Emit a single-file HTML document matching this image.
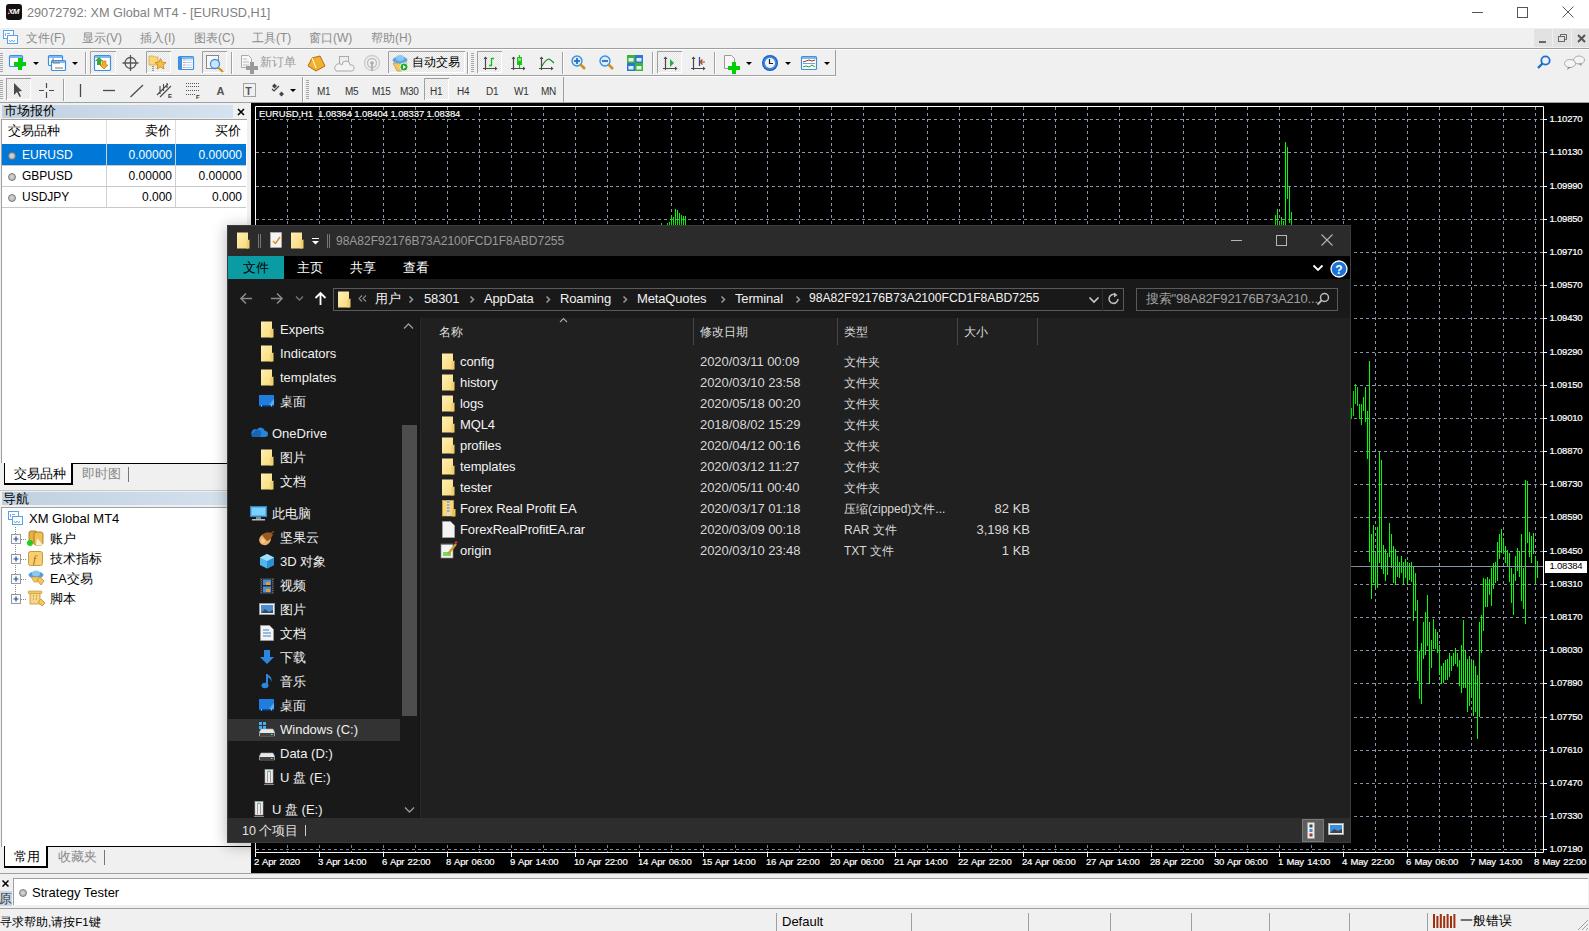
<!DOCTYPE html>
<html><head><meta charset="utf-8"><style>
html,body{margin:0;padding:0;width:1589px;height:931px;overflow:hidden;background:#f0f0f0;font-family:"Liberation Sans", sans-serif;}
div,svg{box-sizing:border-box;}
</style></head><body>
<div style="position:relative;width:1589px;height:931px;overflow:hidden;">
<div style="position:absolute;left:0px;top:0px;width:1589px;height:28px;background:#fff;"></div><div style="position:absolute;left:6px;top:4px;width:16px;height:16px;background:#111;border-radius:3px;"></div><div style="position:absolute;left:8px;top:8px;font-size:8px;line-height:8px;color:#fff;white-space:nowrap;font-weight:bold;font-style:italic;letter-spacing:-0.5px;">XM</div><div style="position:absolute;left:8px;top:11px;width:2px;height:2px;background:#c00;"></div><div style="position:absolute;left:27px;top:6px;font-size:12.7px;line-height:14px;color:#808080;white-space:nowrap;">29072792: XM Global MT4 - [EURUSD,H1]</div><div style="position:absolute;left:1472px;top:12px;width:11px;height:1px;background:#555;"></div><div style="position:absolute;left:1517px;top:7px;width:11px;height:11px;border:1px solid #555;"></div><svg style="position:absolute;left:1562px;top:6px;" width="12" height="12" viewBox="0 0 12 12"><path d="M0.5 0.5 L11.5 11.5 M11.5 0.5 L0.5 11.5" stroke="#555" stroke-width="1"/></svg><div style="position:absolute;left:0px;top:28px;width:1589px;height:20px;background:#f0f0f0;"></div><div style="position:absolute;left:0px;top:48px;width:1589px;height:1px;background:#a0a0a0;"></div><div style="position:absolute;left:0px;top:49px;width:1589px;height:1px;background:#fff;"></div><div style="position:absolute;left:26px;top:31px;font-size:12px;line-height:15px;color:#8c8c8c;white-space:nowrap;">文件(F)</div><div style="position:absolute;left:82px;top:31px;font-size:12px;line-height:15px;color:#8c8c8c;white-space:nowrap;">显示(V)</div><div style="position:absolute;left:140px;top:31px;font-size:12px;line-height:15px;color:#8c8c8c;white-space:nowrap;">插入(I)</div><div style="position:absolute;left:194px;top:31px;font-size:12px;line-height:15px;color:#8c8c8c;white-space:nowrap;">图表(C)</div><div style="position:absolute;left:252px;top:31px;font-size:12px;line-height:15px;color:#8c8c8c;white-space:nowrap;">工具(T)</div><div style="position:absolute;left:309px;top:31px;font-size:12px;line-height:15px;color:#8c8c8c;white-space:nowrap;">窗口(W)</div><div style="position:absolute;left:371px;top:31px;font-size:12px;line-height:15px;color:#8c8c8c;white-space:nowrap;">帮助(H)</div><div style="position:absolute;left:1534px;top:29px;width:18px;height:18px;background:#e2e2e2;"></div><div style="position:absolute;left:1553px;top:29px;width:18px;height:18px;background:#e2e2e2;"></div><div style="position:absolute;left:1572px;top:29px;width:18px;height:18px;background:#e2e2e2;"></div><div style="position:absolute;left:1539px;top:41px;width:7px;height:2px;background:#666;"></div><svg style="position:absolute;left:1557px;top:33px;" width="10" height="10" viewBox="0 0 10 10"><rect x="1.5" y="3.5" width="6" height="5" fill="none" stroke="#666"/><path d="M3.5 3.5 V1.5 H9.5 V6.5 H7.5" fill="none" stroke="#666"/></svg><svg style="position:absolute;left:1577px;top:34px;" width="9" height="9" viewBox="0 0 9 9"><path d="M1 1 L8 8 M8 1 L1 8" stroke="#555" stroke-width="2"/></svg><svg style="position:absolute;left:0px;top:0px;" width="1589" height="104" viewBox="0 0 1589 104"><rect x="0" y="75" width="836" height="1" fill="#a0a0a0"/><rect x="0" y="76" width="836" height="1" fill="#fff"/><rect x="835" y="50" width="1" height="26" fill="#a0a0a0"/><rect x="563" y="77" width="1" height="25" fill="#a0a0a0"/><rect x="0" y="102" width="1589" height="1" fill="#a0a0a0"/><defs><pattern id="chk" width="2" height="2" patternUnits="userSpaceOnUse"><rect width="2" height="2" fill="#f7f7f7"/><rect width="1" height="1" fill="#e4e4e4"/><rect x="1" y="1" width="1" height="1" fill="#e4e4e4"/></pattern></defs><rect x="0" y="53" width="3" height="1" fill="#a8a8a8"/><rect x="0" y="55" width="3" height="1" fill="#a8a8a8"/><rect x="0" y="57" width="3" height="1" fill="#a8a8a8"/><rect x="0" y="59" width="3" height="1" fill="#a8a8a8"/><rect x="0" y="61" width="3" height="1" fill="#a8a8a8"/><rect x="0" y="63" width="3" height="1" fill="#a8a8a8"/><rect x="0" y="65" width="3" height="1" fill="#a8a8a8"/><rect x="0" y="67" width="3" height="1" fill="#a8a8a8"/><rect x="0" y="69" width="3" height="1" fill="#a8a8a8"/><rect x="0" y="71" width="3" height="1" fill="#a8a8a8"/><rect x="9.5" y="55.5" width="13" height="11" rx="1" fill="#fff" stroke="#3d8fe0" stroke-width="1.2"/><rect x="10" y="56" width="12" height="2" fill="#7db8f0"/><path d="M18 58 H22 V62 H26 V66 H22 V70 H18 V66 H14 V62 H18Z" fill="#00d000"/><path d="M33 62 H39 L36 65Z" fill="#000"/><rect x="48.5" y="55.5" width="14" height="10" rx="1" fill="#fff" stroke="#3d8fe0" stroke-width="1.2"/><rect x="49" y="56" width="13" height="2" fill="#7db8f0"/><rect x="51.5" y="60.5" width="14" height="10" rx="1" fill="#fff" stroke="#3d8fe0" stroke-width="1.2"/><rect x="52" y="61" width="13" height="2" fill="#7db8f0"/><path d="M53 58 V63 M53 63 H60 M55 68 H63" stroke="#777" stroke-width="1"/><path d="M72 62 H78 L75 65Z" fill="#000"/><rect x="85" y="52" width="1" height="22" fill="#a0a0a0"/><rect x="86" y="52" width="1" height="22" fill="#fff"/><rect x="90" y="51" width="26" height="23" fill="url(#chk)"/><path d="M90.5 74 V51.5 H116" stroke="#a0a0a0" fill="none"/><path d="M91 73.5 H115.5 V52" stroke="#fff" fill="none"/><rect x="94.5" y="55.5" width="16" height="15" rx="1" fill="#fff" stroke="#3d8fe0" stroke-width="1.2"/><rect x="95" y="56" width="15" height="2" fill="#7db8f0"/><path d="M99 57 L103 61 H101 V65 H97 V61 H95Z" fill="#3aa83a"/><path d="M104 69 L108 65 H106 V61 H102 V65 H100Z" fill="#f0b020" stroke="#c07010" stroke-width="0.6"/><circle cx="130.5" cy="63" r="5.5" fill="none" stroke="#555" stroke-width="1.3"/><path d="M130.5 55 V71 M122.5 63 H138.5" stroke="#555" stroke-width="1.3"/><rect x="146" y="51" width="25" height="22" fill="url(#chk)"/><path d="M146.5 73 V51.5 H171" stroke="#a0a0a0" fill="none"/><path d="M147 72.5 H170.5 V52" stroke="#fff" fill="none"/><path d="M149 56 H153 L154 57 H158 V65 H149Z" fill="#f8d878" stroke="#d8a030" stroke-width="0.7"/><path d="M160.5 58.5 L162.2 62.2 L166 62.6 L163.1 65.2 L164 69 L160.5 67 L157 69 L157.9 65.2 L155 62.6 L158.8 62.2Z" fill="#f4c040" stroke="#c88010" stroke-width="0.8"/><path d="M153 66 V71" stroke="#333" stroke-width="1" stroke-dasharray="1 1"/><rect x="178.5" y="56.5" width="15" height="13" rx="1" fill="#fff" stroke="#3d8fe0" stroke-width="1.2"/><rect x="179" y="57" width="14" height="2" fill="#7db8f0"/><rect x="179" y="57" width="3" height="12" fill="#3d8fe0"/><path d="M185 60 H192 M185 62.5 H192 M185 65 H192 M185 67.5 H192" stroke="#9cc4ec" stroke-width="0.8"/><path d="M183.5 60 h1 M183.5 62.5 h1 M183.5 65 h1 M183.5 67.5 h1" stroke="#a02020"/><rect x="202" y="51" width="25" height="22" fill="url(#chk)"/><path d="M202.5 73 V51.5 H227" stroke="#a0a0a0" fill="none"/><path d="M203 72.5 H226.5 V52" stroke="#fff" fill="none"/><rect x="206.5" y="55.5" width="12" height="13" fill="#f8f8f8" stroke="#888"/><circle cx="215" cy="64" r="4.5" fill="#cfe6fa" stroke="#3d8fe0" stroke-width="1.3"/><path d="M218 67.5 L223 72" stroke="#d09020" stroke-width="2.2"/><rect x="231" y="52" width="1" height="22" fill="#a0a0a0"/><rect x="232" y="52" width="1" height="22" fill="#fff"/><path d="M241.5 55.5 H248.5 L251.5 58.5 V67.5 H241.5Z" fill="#f8f8f8" stroke="#aaa"/><path d="M243 59 H247 M243 62 H249 M243 65 H249" stroke="#bbb"/><path d="M250 62 H254 V66 H258 V70 H254 V74 H250 V70 H246 V66 H250Z" fill="#9a9a9a"/><path d="M312 58 L320 56 L325 66 L316 71 L308 66Z" fill="#f0b030" stroke="#b86a10" stroke-width="1"/><path d="M312 58 L316 68" stroke="#fff3c0" stroke-width="1.2"/><rect x="339.5" y="56.5" width="9" height="8" fill="#eee" stroke="#aaa"/><path d="M336 71 H352 A3 3 0 0 0 350 65 A4 4 0 0 0 342 65 A3 3 0 0 0 336 71Z" fill="#f4f4f4" stroke="#aaa"/><circle cx="372" cy="63" r="7.5" fill="none" stroke="#cfcfcf" stroke-width="1.5"/><circle cx="372" cy="63" r="4.5" fill="none" stroke="#bdbdbd" stroke-width="1.3"/><circle cx="372" cy="63" r="1.8" fill="#aaa"/><path d="M372 64 V71" stroke="#aaa" stroke-width="1.5"/><rect x="388" y="51" width="77" height="22" fill="url(#chk)"/><path d="M388.5 73 V51.5 H465" stroke="#a0a0a0" fill="none"/><path d="M389 72.5 H464.5 V52" stroke="#fff" fill="none"/><path d="M393 63 L407 63 L402 71 L397 71Z" fill="#f0c860" stroke="#c89030" stroke-width="0.7"/><ellipse cx="400" cy="60" rx="7.5" ry="3.5" fill="#5aa8e8"/><ellipse cx="400" cy="58" rx="4" ry="3" fill="#8cc8f4"/><circle cx="404" cy="67" r="4" fill="#22aa22" stroke="#fff" stroke-width="0.8"/><path d="M403 65 L406 67 L403 69Z" fill="#fff"/><rect x="467" y="52" width="1" height="22" fill="#a0a0a0"/><rect x="468" y="52" width="1" height="22" fill="#fff"/><rect x="471" y="53" width="3" height="1" fill="#a8a8a8"/><rect x="471" y="55" width="3" height="1" fill="#a8a8a8"/><rect x="471" y="57" width="3" height="1" fill="#a8a8a8"/><rect x="471" y="59" width="3" height="1" fill="#a8a8a8"/><rect x="471" y="61" width="3" height="1" fill="#a8a8a8"/><rect x="471" y="63" width="3" height="1" fill="#a8a8a8"/><rect x="471" y="65" width="3" height="1" fill="#a8a8a8"/><rect x="471" y="67" width="3" height="1" fill="#a8a8a8"/><rect x="471" y="69" width="3" height="1" fill="#a8a8a8"/><rect x="471" y="71" width="3" height="1" fill="#a8a8a8"/><rect x="477" y="51" width="25" height="22" fill="url(#chk)"/><path d="M477.5 73 V51.5 H502" stroke="#a0a0a0" fill="none"/><path d="M478 72.5 H501.5 V52" stroke="#fff" fill="none"/><path d="M485.5 57 V70 M483 68.5 H497" stroke="#4a4a4a" stroke-width="1.2"/><path d="M483.5 59 L485.5 56.5 L487.5 59Z M495 66.5 L497.5 68.5 L495 70.5Z" fill="#4a4a4a"/><path d="M491.5 58 V66 M491.5 58.5 H494 M489 65.5 H491.5" stroke="#10c010" stroke-width="1.3"/><path d="M513.5 57 V70 M511 68.5 H525" stroke="#4a4a4a" stroke-width="1.2"/><path d="M511.5 59 L513.5 56.5 L515.5 59Z M523 66.5 L525.5 68.5 L523 70.5Z" fill="#4a4a4a"/><rect x="517" y="57" width="5" height="8" fill="#10d010"/><path d="M519.5 55 V68" stroke="#10c010" stroke-width="1.2"/><rect x="518" y="58" width="3" height="3" fill="#9c9"/><path d="M541.5 57 V70 M539 68.5 H553" stroke="#4a4a4a" stroke-width="1.2"/><path d="M539.5 59 L541.5 56.5 L543.5 59Z M551 66.5 L553.5 68.5 L551 70.5Z" fill="#4a4a4a"/><path d="M542 66 Q546 59 549 59 Q551 60 554 63" stroke="#109010" stroke-width="1.1" fill="none"/><rect x="562" y="52" width="1" height="22" fill="#a0a0a0"/><rect x="563" y="52" width="1" height="22" fill="#fff"/><circle cx="577" cy="61" r="5" fill="#d8eefc" stroke="#3d8fe0" stroke-width="1.4"/><path d="M580.5 64.5 L585 69" stroke="#d09020" stroke-width="2.5"/><path d="M574 61 H580" stroke="#2a6cc0" stroke-width="1.8"/><path d="M577 58 V64" stroke="#2a6cc0" stroke-width="1.8"/><circle cx="605" cy="61" r="5" fill="#d8eefc" stroke="#3d8fe0" stroke-width="1.4"/><path d="M608.5 64.5 L613 69" stroke="#d09020" stroke-width="2.5"/><path d="M602 61 H608" stroke="#2a6cc0" stroke-width="1.8"/><rect x="627" y="55" width="8" height="8" fill="#3cb43c"/><rect x="635" y="55" width="8" height="8" fill="#2a78d0"/><rect x="627" y="63" width="8" height="8" fill="#2a78d0"/><rect x="635" y="63" width="8" height="8" fill="#3cb43c"/><rect x="628.5" y="58" width="5" height="3.5" fill="#e8f4e8"/><rect x="636.5" y="58" width="5" height="3.5" fill="#e0ecf8"/><rect x="628.5" y="66" width="5" height="3.5" fill="#e0ecf8"/><rect x="636.5" y="66" width="5" height="3.5" fill="#e8f4e8"/><rect x="652" y="52" width="1" height="22" fill="#a0a0a0"/><rect x="653" y="52" width="1" height="22" fill="#fff"/><rect x="657" y="51" width="25" height="22" fill="url(#chk)"/><path d="M657.5 73 V51.5 H682" stroke="#a0a0a0" fill="none"/><path d="M658 72.5 H681.5 V52" stroke="#fff" fill="none"/><path d="M665.5 57 V70 M663 68.5 H677" stroke="#4a4a4a" stroke-width="1.2"/><path d="M663.5 59 L665.5 56.5 L667.5 59Z M675 66.5 L677.5 68.5 L675 70.5Z" fill="#4a4a4a"/><path d="M670 59 L674 63 L670 67Z" fill="#20b040"/><path d="M693.5 57 V70 M691 68.5 H705" stroke="#4a4a4a" stroke-width="1.2"/><path d="M691.5 59 L693.5 56.5 L695.5 59Z M703 66.5 L705.5 68.5 L703 70.5Z" fill="#4a4a4a"/><path d="M699.5 57 V66" stroke="#2050c0" stroke-width="1.3"/><path d="M705 62 H701 M702.5 59.5 L700 62 L702.5 64.5" stroke="#b04010" stroke-width="1.2" fill="none"/><rect x="714" y="52" width="1" height="22" fill="#a0a0a0"/><rect x="715" y="52" width="1" height="22" fill="#fff"/><path d="M724.5 55.5 H731.5 L734.5 58.5 V68.5 H724.5Z" fill="#f8f8f8" stroke="#999"/><path d="M732 62 H736 V66 H740 V70 H736 V74 H732 V70 H728 V66 H732Z" fill="#00d000"/><path d="M746 62 H752 L749 65Z" fill="#000"/><circle cx="770" cy="63" r="8" fill="#1a5cc0"/><circle cx="770" cy="63" r="6.8" fill="#3a8ae8"/><circle cx="770" cy="63" r="5" fill="#f4f4f4"/><path d="M769.5 59 V63.5 H773" stroke="#222" stroke-width="1.2" fill="none"/><path d="M785 62 H791 L788 65Z" fill="#000"/><rect x="801.5" y="56.5" width="15" height="13" rx="1" fill="#fff" stroke="#3d8fe0" stroke-width="1.2"/><rect x="802" y="57" width="14" height="2" fill="#7db8f0"/><path d="M803 63.5 H815" stroke="#3d8fe0" stroke-width="0.8"/><path d="M803 62 L806 61 L809 60 L812 61 L815 60" stroke="#b03010" stroke-width="1" fill="none"/><path d="M803 67 L806 66 L809 67 L812 65 L815 67" stroke="#20a040" stroke-width="1" fill="none"/><path d="M824 62 H830 L827 65Z" fill="#000"/><circle cx="1545.5" cy="60.5" r="4.2" fill="none" stroke="#1a6fd0" stroke-width="1.8"/><path d="M1542.5 63.5 L1538 68" stroke="#1a6fd0" stroke-width="2.4"/><ellipse cx="1579" cy="60" rx="5.5" ry="4" fill="#f4f4f4" stroke="#999" stroke-width="0.8"/><path d="M1581 63.5 L1582 66 L1578 63.5" fill="#888"/><ellipse cx="1570" cy="63.5" rx="5.5" ry="4" fill="#f4f4f4" stroke="#999" stroke-width="0.8"/><path d="M1568 67 L1567 70 L1571 67" fill="#888"/><rect x="0" y="80" width="3" height="1" fill="#a8a8a8"/><rect x="0" y="82" width="3" height="1" fill="#a8a8a8"/><rect x="0" y="84" width="3" height="1" fill="#a8a8a8"/><rect x="0" y="86" width="3" height="1" fill="#a8a8a8"/><rect x="0" y="88" width="3" height="1" fill="#a8a8a8"/><rect x="0" y="90" width="3" height="1" fill="#a8a8a8"/><rect x="0" y="92" width="3" height="1" fill="#a8a8a8"/><rect x="0" y="94" width="3" height="1" fill="#a8a8a8"/><rect x="0" y="96" width="3" height="1" fill="#a8a8a8"/><rect x="0" y="98" width="3" height="1" fill="#a8a8a8"/><rect x="6" y="78" width="25" height="22" fill="url(#chk)"/><path d="M6.5 100 V78.5 H31" stroke="#a0a0a0" fill="none"/><path d="M7 99.5 H30.5 V79" stroke="#fff" fill="none"/><path d="M14 83 L14 95 L17 92 L19.5 97 L21 96.3 L18.6 91.4 L22 91Z" fill="#4a4a4a"/><path d="M46.5 83 V88 M46.5 92 V98 M39 90.5 H44 M49 90.5 H54" stroke="#4a4a4a" stroke-width="1.2"/><rect x="63" y="79" width="1" height="22" fill="#a0a0a0"/><rect x="64" y="79" width="1" height="22" fill="#fff"/><path d="M80.5 84 V97" stroke="#4a4a4a" stroke-width="1.3"/><path d="M103 90.5 H115" stroke="#4a4a4a" stroke-width="1.3"/><path d="M130.5 97 L143 85" stroke="#4a4a4a" stroke-width="1.2"/><path d="M157 95 L168 84 M160 97 L171 86 M160 86 V94 M163.5 84 V91 M167 83 V88" stroke="#4a4a4a" stroke-width="1.1"/><text x="168" y="98" font-size="6" font-weight="bold" fill="#333" font-family="Liberation Sans">E</text><path d="M186 83.5 H199 M186 86.5 H199 M186 90.5 H199 M186 94.5 H195" stroke="#555" stroke-width="1" stroke-dasharray="1 1"/><text x="196" y="98.5" font-size="6" font-weight="bold" fill="#333" font-family="Liberation Sans">F</text><text x="216.5" y="95" font-size="11" font-weight="bold" fill="#555" font-family="Liberation Sans">A</text><rect x="243.5" y="83.5" width="12" height="13" fill="none" stroke="#555" stroke-width="1" stroke-dasharray="1 1"/><text x="245.2" y="94.5" font-size="10.5" font-weight="bold" fill="#555" font-family="Liberation Sans">T</text><path d="M272 86 L274.5 83.5 L277 86 L274.5 88.5Z M279 94 L281.5 91.5 L284 94 L281.5 96.5Z" fill="#444"/><path d="M272 89 L274 91 L279 86" stroke="#444" stroke-width="1.2" fill="none"/><path d="M290 89 H296 L293 92Z" fill="#000"/><rect x="302" y="77" width="1" height="25" fill="#a0a0a0"/><rect x="303" y="77" width="1" height="25" fill="#fff"/><rect x="306" y="80" width="3" height="1" fill="#a8a8a8"/><rect x="306" y="82" width="3" height="1" fill="#a8a8a8"/><rect x="306" y="84" width="3" height="1" fill="#a8a8a8"/><rect x="306" y="86" width="3" height="1" fill="#a8a8a8"/><rect x="306" y="88" width="3" height="1" fill="#a8a8a8"/><rect x="306" y="90" width="3" height="1" fill="#a8a8a8"/><rect x="306" y="92" width="3" height="1" fill="#a8a8a8"/><rect x="306" y="94" width="3" height="1" fill="#a8a8a8"/><rect x="306" y="96" width="3" height="1" fill="#a8a8a8"/><rect x="306" y="98" width="3" height="1" fill="#a8a8a8"/><rect x="424" y="78" width="25" height="22" fill="url(#chk)"/><path d="M424.5 100 V78.5 H449" stroke="#a0a0a0" fill="none"/><path d="M425 99.5 H448.5 V79" stroke="#fff" fill="none"/></svg><div style="position:absolute;left:260px;top:55px;font-size:12px;line-height:14px;color:#9a9a9a;white-space:nowrap;">新订单</div><div style="position:absolute;left:412px;top:55px;font-size:11.6px;line-height:14px;color:#000;white-space:nowrap;">自动交易</div><div style="position:absolute;left:317px;top:85.5px;font-size:10px;line-height:12px;color:#333;white-space:nowrap;letter-spacing:-0.3px;">M1</div><div style="position:absolute;left:345px;top:85.5px;font-size:10px;line-height:12px;color:#333;white-space:nowrap;letter-spacing:-0.3px;">M5</div><div style="position:absolute;left:372px;top:85.5px;font-size:10px;line-height:12px;color:#333;white-space:nowrap;letter-spacing:-0.3px;">M15</div><div style="position:absolute;left:400px;top:85.5px;font-size:10px;line-height:12px;color:#333;white-space:nowrap;letter-spacing:-0.3px;">M30</div><div style="position:absolute;left:430px;top:85.5px;font-size:10px;line-height:12px;color:#333;white-space:nowrap;letter-spacing:-0.3px;">H1</div><div style="position:absolute;left:457px;top:85.5px;font-size:10px;line-height:12px;color:#333;white-space:nowrap;letter-spacing:-0.3px;">H4</div><div style="position:absolute;left:486px;top:85.5px;font-size:10px;line-height:12px;color:#333;white-space:nowrap;letter-spacing:-0.3px;">D1</div><div style="position:absolute;left:514px;top:85.5px;font-size:10px;line-height:12px;color:#333;white-space:nowrap;letter-spacing:-0.3px;">W1</div><div style="position:absolute;left:541px;top:85.5px;font-size:10px;line-height:12px;color:#333;white-space:nowrap;letter-spacing:-0.3px;">MN</div><div style="position:absolute;left:0px;top:103px;width:251px;height:770px;background:#f0f0f0;"></div><div style="position:absolute;left:2px;top:105px;width:231px;height:13px;background:linear-gradient(90deg,#c0d0df,#d5e3f0);"></div><div style="position:absolute;left:4px;top:104px;font-size:12.5px;line-height:15px;color:#000;white-space:nowrap;">市场报价</div><svg style="position:absolute;left:237px;top:108px;" width="8" height="8" viewBox="0 0 8 8"><path d="M1 1 L7 7 M7 1 L1 7" stroke="#000" stroke-width="1.6"/></svg><div style="position:absolute;left:1px;top:119px;width:246px;height:345px;background:#fff;border-left:1px solid #a0a0a0;border-top:1px solid #a0a0a0;"></div><div style="position:absolute;left:8px;top:124px;font-size:12.5px;line-height:15px;color:#000;white-space:nowrap;">交易品种</div><div style="position:absolute;right:1418px;top:124px;font-size:12.5px;line-height:15px;color:#000;white-space:nowrap;text-align:right;">卖价</div><div style="position:absolute;right:1348px;top:124px;font-size:12.5px;line-height:15px;color:#000;white-space:nowrap;text-align:right;">买价</div><div style="position:absolute;left:106px;top:120px;width:1px;height:24px;background:#dcdcdc;"></div><div style="position:absolute;left:175px;top:120px;width:1px;height:24px;background:#dcdcdc;"></div><div style="position:absolute;left:2px;top:144px;width:244px;height:21px;background:#0078d7;"></div><div style="position:absolute;left:106px;top:144px;width:1px;height:21px;background:#d0d0d0;"></div><div style="position:absolute;left:175px;top:144px;width:1px;height:21px;background:#d0d0d0;"></div><div style="position:absolute;left:2px;top:165px;width:244px;height:1px;background:#c8c8c8;"></div><div style="position:absolute;left:8px;top:152px;width:8px;height:8px;border-radius:50%;background:radial-gradient(circle at 45% 45%,#d8d8d8,#a8a8a8);border:1px solid #7a7a7a;"></div><div style="position:absolute;left:22px;top:148px;font-size:12px;line-height:14px;color:#fff;white-space:nowrap;">EURUSD</div><div style="position:absolute;right:1417px;top:148px;font-size:12px;line-height:14px;color:#fff;white-space:nowrap;text-align:right;">0.00000</div><div style="position:absolute;right:1347px;top:148px;font-size:12px;line-height:14px;color:#fff;white-space:nowrap;text-align:right;">0.00000</div><div style="position:absolute;left:106px;top:165px;width:1px;height:21px;background:#d0d0d0;"></div><div style="position:absolute;left:175px;top:165px;width:1px;height:21px;background:#d0d0d0;"></div><div style="position:absolute;left:2px;top:186px;width:244px;height:1px;background:#c8c8c8;"></div><div style="position:absolute;left:8px;top:173px;width:8px;height:8px;border-radius:50%;background:radial-gradient(circle at 45% 45%,#d8d8d8,#a8a8a8);border:1px solid #7a7a7a;"></div><div style="position:absolute;left:22px;top:169px;font-size:12px;line-height:14px;color:#000;white-space:nowrap;">GBPUSD</div><div style="position:absolute;right:1417px;top:169px;font-size:12px;line-height:14px;color:#000;white-space:nowrap;text-align:right;">0.00000</div><div style="position:absolute;right:1347px;top:169px;font-size:12px;line-height:14px;color:#000;white-space:nowrap;text-align:right;">0.00000</div><div style="position:absolute;left:106px;top:186px;width:1px;height:21px;background:#d0d0d0;"></div><div style="position:absolute;left:175px;top:186px;width:1px;height:21px;background:#d0d0d0;"></div><div style="position:absolute;left:2px;top:207px;width:244px;height:1px;background:#c8c8c8;"></div><div style="position:absolute;left:8px;top:194px;width:8px;height:8px;border-radius:50%;background:radial-gradient(circle at 45% 45%,#d8d8d8,#a8a8a8);border:1px solid #7a7a7a;"></div><div style="position:absolute;left:22px;top:190px;font-size:12px;line-height:14px;color:#000;white-space:nowrap;">USDJPY</div><div style="position:absolute;right:1417px;top:190px;font-size:12px;line-height:14px;color:#000;white-space:nowrap;text-align:right;">0.000</div><div style="position:absolute;right:1347px;top:190px;font-size:12px;line-height:14px;color:#000;white-space:nowrap;text-align:right;">0.000</div><div style="position:absolute;left:0px;top:463px;width:251px;height:22px;background:#f0f0f0;"></div><div style="position:absolute;left:72px;top:463px;width:179px;height:1px;background:#000;"></div><div style="position:absolute;left:4px;top:463px;width:69px;height:22px;background:#fff;border-left:1px solid #000;border-right:2px solid #000;border-bottom:2px solid #000;"></div><div style="position:absolute;left:14px;top:467px;font-size:12.5px;line-height:15px;color:#000;white-space:nowrap;">交易品种</div><div style="position:absolute;left:82px;top:467px;font-size:12.5px;line-height:15px;color:#888;white-space:nowrap;">即时图</div><div style="position:absolute;left:128px;top:467px;width:1px;height:15px;background:#777;"></div><div style="position:absolute;left:0px;top:490px;width:251px;height:1px;background:#c8c8c8;"></div><div style="position:absolute;left:2px;top:492px;width:249px;height:13px;background:linear-gradient(90deg,#c0d0df,#d5e3f0);"></div><div style="position:absolute;left:3px;top:492px;font-size:12.5px;line-height:15px;color:#000;white-space:nowrap;">导航</div><div style="position:absolute;left:1px;top:507px;width:250px;height:340px;background:#fff;border-left:1px solid #a0a0a0;border-top:1px solid #a0a0a0;"></div><div style="position:absolute;left:29px;top:511px;font-size:13px;line-height:15px;color:#000;white-space:nowrap;">XM Global MT4</div><div style="position:absolute;left:50px;top:532px;font-size:12.5px;line-height:15px;color:#000;white-space:nowrap;">账户</div><div style="position:absolute;left:50px;top:552px;font-size:12.5px;line-height:15px;color:#000;white-space:nowrap;">技术指标</div><div style="position:absolute;left:50px;top:572px;font-size:12.5px;line-height:15px;color:#000;white-space:nowrap;">EA交易</div><div style="position:absolute;left:50px;top:592px;font-size:12.5px;line-height:15px;color:#000;white-space:nowrap;">脚本</div><svg style="position:absolute;left:0px;top:0px;" width="251" height="620" viewBox="0 0 251 620"><rect x="8.5" y="511.5" width="10" height="8" fill="#fff" stroke="#5aa2e8"/><rect x="12.5" y="516.5" width="10" height="8" fill="#fff" stroke="#5aa2e8"/><path d="M14 521 l1.5 2 l1.5 -2 l1.5 2 l1.5 -2" stroke="#4a9ae8" fill="none" stroke-width="0.8"/><path d="M10.5 514 v3 M12 514.5 h3" stroke="#4a9ae8" stroke-width="0.8"/><path d="M15.5 527 V599" stroke="#888" stroke-dasharray="1 1"/><rect x="11.5" y="534.5" width="9" height="9" fill="#fafafa" stroke="#999"/><path d="M13.5 539 H18.5 M16 536.5 V541.5" stroke="#2050a0" stroke-width="1.2"/><path d="M21 539.5 H27" stroke="#888" stroke-dasharray="1 1"/><rect x="11.5" y="554.5" width="9" height="9" fill="#fafafa" stroke="#999"/><path d="M13.5 559 H18.5 M16 556.5 V561.5" stroke="#2050a0" stroke-width="1.2"/><path d="M21 559.5 H27" stroke="#888" stroke-dasharray="1 1"/><rect x="11.5" y="574.5" width="9" height="9" fill="#fafafa" stroke="#999"/><path d="M13.5 579 H18.5 M16 576.5 V581.5" stroke="#2050a0" stroke-width="1.2"/><path d="M21 579.5 H27" stroke="#888" stroke-dasharray="1 1"/><rect x="11.5" y="594.5" width="9" height="9" fill="#fafafa" stroke="#999"/><path d="M13.5 599 H18.5 M16 596.5 V601.5" stroke="#2050a0" stroke-width="1.2"/><path d="M21 599.5 H27" stroke="#888" stroke-dasharray="1 1"/><rect x="29" y="531" width="8" height="12" rx="2" fill="#e8b040" stroke="#a07020" stroke-width="0.8"/><rect x="34" y="532" width="9" height="13" rx="2" fill="#f0c050" stroke="#a07020" stroke-width="0.8"/><path d="M37 538 L43 545 H36Z" fill="#f8f0d0"/><circle cx="30" cy="543" r="3" fill="#20d020"/><rect x="28.5" y="551.5" width="14" height="14" rx="2" fill="#f6d070" stroke="#c89030" stroke-width="0.9"/><text x="33" y="563" font-size="11" font-style="italic" fill="#b06010" font-family="Liberation Serif">f</text><ellipse cx="36" cy="575" rx="7.5" ry="3.5" fill="#4aa0e0"/><ellipse cx="36" cy="573.5" rx="4" ry="3" fill="#8cc8f4"/><path d="M31 577 L41 577 L38 582 L34 582Z" fill="#f0c860" stroke="#c89030" stroke-width="0.6"/><path d="M37 580 L40 577 L44 581 L41 585Z" fill="#f0c860" stroke="#c89030" stroke-width="0.8"/><rect x="30" y="592" width="10" height="12" fill="#f4d888" stroke="#c89030" stroke-width="0.8"/><rect x="28" y="591" width="14" height="2.5" rx="1" fill="#f0c860" stroke="#c89030" stroke-width="0.6"/><path d="M38 602 L41 599 L45 603 L42 606Z" fill="#f0c860" stroke="#c89030" stroke-width="0.8"/><path d="M33 596 h1 M36 596 h1 M33 599 h1 M36 599 h1" stroke="#a08040"/><rect x="3.5" y="30.5" width="10" height="8" fill="#fff" stroke="#5aa2e8"/><rect x="7.5" y="35.5" width="10" height="8" fill="#fff" stroke="#5aa2e8"/><path d="M9 40 l1.5 2 l1.5 -2 l1.5 2 l1.5 -2" stroke="#4a9ae8" fill="none" stroke-width="0.8"/><path d="M5.5 33 v3 M7 33.5 h3" stroke="#4a9ae8" stroke-width="0.8"/></svg><div style="position:absolute;left:47px;top:846px;width:204px;height:1px;background:#000;"></div><div style="position:absolute;left:4px;top:846px;width:44px;height:22px;background:#fff;border-left:1px solid #000;border-right:2px solid #000;border-bottom:2px solid #000;"></div><div style="position:absolute;left:14px;top:850px;font-size:12.5px;line-height:15px;color:#000;white-space:nowrap;">常用</div><div style="position:absolute;left:58px;top:850px;font-size:12.5px;line-height:15px;color:#888;white-space:nowrap;">收藏夹</div><div style="position:absolute;left:104px;top:850px;width:1px;height:15px;background:#777;"></div><div style="position:absolute;left:251px;top:103px;width:1338px;height:770px;background:#000;"></div><div style="position:absolute;left:0px;top:873px;width:1589px;height:1px;background:#a0a0a0;"></div><div style="position:absolute;left:0px;top:874px;width:1589px;height:35px;background:#f0f0f0;"></div><div style="position:absolute;left:13px;top:878px;width:1575px;height:27px;background:#fff;border-top:1px solid #a0a0a0;border-left:1px solid #a0a0a0;"></div><svg style="position:absolute;left:2px;top:880px;" width="7" height="7" viewBox="0 0 7 7"><path d="M0.5 0.5 L6.5 6.5 M6.5 0.5 L0.5 6.5" stroke="#000" stroke-width="1.5"/></svg><div style="position:absolute;left:0px;top:891px;width:12px;height:15px;background:#c8d8e8;overflow:hidden;"><div style="font-size:13px;line-height:15px;margin-left:-1px;color:#333;">原</div></div><div style="position:absolute;left:19px;top:886px;font-size:1px;line-height:1px;color:#000;white-space:nowrap;"></div><div style="position:absolute;left:19px;top:889px;width:8px;height:8px;border-radius:50%;background:radial-gradient(circle at 45% 45%,#d8d8d8,#a8a8a8);border:1px solid #7a7a7a;"></div><div style="position:absolute;left:32px;top:885px;font-size:13px;line-height:15px;color:#000;white-space:nowrap;">Strategy Tester</div><div style="position:absolute;left:0px;top:908px;width:1589px;height:1px;background:#a0a0a0;"></div><div style="position:absolute;left:0px;top:909px;width:1589px;height:22px;background:#f0f0f0;"></div><div style="position:absolute;left:0px;top:914px;font-size:11.6px;line-height:15px;color:#000;white-space:nowrap;">寻求帮助,请按F1键</div><div style="position:absolute;left:776px;top:913px;width:1px;height:18px;background:#a0a0a0;"></div><div style="position:absolute;left:911px;top:913px;width:1px;height:18px;background:#a0a0a0;"></div><div style="position:absolute;left:1028px;top:913px;width:1px;height:18px;background:#a0a0a0;"></div><div style="position:absolute;left:1110px;top:913px;width:1px;height:18px;background:#a0a0a0;"></div><div style="position:absolute;left:1191px;top:913px;width:1px;height:18px;background:#a0a0a0;"></div><div style="position:absolute;left:1269px;top:913px;width:1px;height:18px;background:#a0a0a0;"></div><div style="position:absolute;left:1349px;top:913px;width:1px;height:18px;background:#a0a0a0;"></div><div style="position:absolute;left:1427px;top:913px;width:1px;height:18px;background:#a0a0a0;"></div><div style="position:absolute;left:782px;top:914px;font-size:13px;line-height:15px;color:#000;white-space:nowrap;">Default</div><div style="position:absolute;left:1460px;top:914px;font-size:12.5px;line-height:15px;color:#000;white-space:nowrap;">一般错误</div><svg style="position:absolute;left:1576px;top:918px;" width="13" height="13" viewBox="0 0 13 13"><path d="M12 2 L2 12 M12 6 L6 12 M12 10 L10 12" stroke="#a0a0a0" stroke-width="1"/></svg><svg style="position:absolute;left:1433px;top:914px;" width="24" height="14" viewBox="0 0 24 14"><rect x="0.0" y="0" width="2" height="14" fill="#a03010"/><rect x="3.4" y="2" width="2" height="12" fill="#a03010"/><rect x="6.8" y="0" width="2" height="14" fill="#a03010"/><rect x="10.2" y="2" width="2" height="12" fill="#a03010"/><rect x="13.6" y="0" width="2" height="14" fill="#a03010"/><rect x="17.0" y="2" width="2" height="12" fill="#a03010"/><rect x="20.4" y="0" width="2" height="14" fill="#a03010"/></svg><svg style="position:absolute;left:251px;top:103px;" width="1338" height="770" viewBox="0 0 1338 770"><line x1="36.5" y1="4" x2="36.5" y2="749" stroke="#8796a8" stroke-width="1" stroke-dasharray="3 3"/><line x1="68.5" y1="4" x2="68.5" y2="749" stroke="#8796a8" stroke-width="1" stroke-dasharray="3 3"/><line x1="100.5" y1="4" x2="100.5" y2="749" stroke="#8796a8" stroke-width="1" stroke-dasharray="3 3"/><line x1="132.5" y1="4" x2="132.5" y2="749" stroke="#8796a8" stroke-width="1" stroke-dasharray="3 3"/><line x1="164.5" y1="4" x2="164.5" y2="749" stroke="#8796a8" stroke-width="1" stroke-dasharray="3 3"/><line x1="196.5" y1="4" x2="196.5" y2="749" stroke="#8796a8" stroke-width="1" stroke-dasharray="3 3"/><line x1="228.5" y1="4" x2="228.5" y2="749" stroke="#8796a8" stroke-width="1" stroke-dasharray="3 3"/><line x1="260.5" y1="4" x2="260.5" y2="749" stroke="#8796a8" stroke-width="1" stroke-dasharray="3 3"/><line x1="292.5" y1="4" x2="292.5" y2="749" stroke="#8796a8" stroke-width="1" stroke-dasharray="3 3"/><line x1="324.5" y1="4" x2="324.5" y2="749" stroke="#8796a8" stroke-width="1" stroke-dasharray="3 3"/><line x1="356.5" y1="4" x2="356.5" y2="749" stroke="#8796a8" stroke-width="1" stroke-dasharray="3 3"/><line x1="388.5" y1="4" x2="388.5" y2="749" stroke="#8796a8" stroke-width="1" stroke-dasharray="3 3"/><line x1="420.5" y1="4" x2="420.5" y2="749" stroke="#8796a8" stroke-width="1" stroke-dasharray="3 3"/><line x1="452.5" y1="4" x2="452.5" y2="749" stroke="#8796a8" stroke-width="1" stroke-dasharray="3 3"/><line x1="484.5" y1="4" x2="484.5" y2="749" stroke="#8796a8" stroke-width="1" stroke-dasharray="3 3"/><line x1="516.5" y1="4" x2="516.5" y2="749" stroke="#8796a8" stroke-width="1" stroke-dasharray="3 3"/><line x1="548.5" y1="4" x2="548.5" y2="749" stroke="#8796a8" stroke-width="1" stroke-dasharray="3 3"/><line x1="580.5" y1="4" x2="580.5" y2="749" stroke="#8796a8" stroke-width="1" stroke-dasharray="3 3"/><line x1="612.5" y1="4" x2="612.5" y2="749" stroke="#8796a8" stroke-width="1" stroke-dasharray="3 3"/><line x1="644.5" y1="4" x2="644.5" y2="749" stroke="#8796a8" stroke-width="1" stroke-dasharray="3 3"/><line x1="676.5" y1="4" x2="676.5" y2="749" stroke="#8796a8" stroke-width="1" stroke-dasharray="3 3"/><line x1="708.5" y1="4" x2="708.5" y2="749" stroke="#8796a8" stroke-width="1" stroke-dasharray="3 3"/><line x1="740.5" y1="4" x2="740.5" y2="749" stroke="#8796a8" stroke-width="1" stroke-dasharray="3 3"/><line x1="772.5" y1="4" x2="772.5" y2="749" stroke="#8796a8" stroke-width="1" stroke-dasharray="3 3"/><line x1="804.5" y1="4" x2="804.5" y2="749" stroke="#8796a8" stroke-width="1" stroke-dasharray="3 3"/><line x1="836.5" y1="4" x2="836.5" y2="749" stroke="#8796a8" stroke-width="1" stroke-dasharray="3 3"/><line x1="868.5" y1="4" x2="868.5" y2="749" stroke="#8796a8" stroke-width="1" stroke-dasharray="3 3"/><line x1="900.5" y1="4" x2="900.5" y2="749" stroke="#8796a8" stroke-width="1" stroke-dasharray="3 3"/><line x1="932.5" y1="4" x2="932.5" y2="749" stroke="#8796a8" stroke-width="1" stroke-dasharray="3 3"/><line x1="964.5" y1="4" x2="964.5" y2="749" stroke="#8796a8" stroke-width="1" stroke-dasharray="3 3"/><line x1="996.5" y1="4" x2="996.5" y2="749" stroke="#8796a8" stroke-width="1" stroke-dasharray="3 3"/><line x1="1028.5" y1="4" x2="1028.5" y2="749" stroke="#8796a8" stroke-width="1" stroke-dasharray="3 3"/><line x1="1060.5" y1="4" x2="1060.5" y2="749" stroke="#8796a8" stroke-width="1" stroke-dasharray="3 3"/><line x1="1092.5" y1="4" x2="1092.5" y2="749" stroke="#8796a8" stroke-width="1" stroke-dasharray="3 3"/><line x1="1124.5" y1="4" x2="1124.5" y2="749" stroke="#8796a8" stroke-width="1" stroke-dasharray="3 3"/><line x1="1156.5" y1="4" x2="1156.5" y2="749" stroke="#8796a8" stroke-width="1" stroke-dasharray="3 3"/><line x1="1188.5" y1="4" x2="1188.5" y2="749" stroke="#8796a8" stroke-width="1" stroke-dasharray="3 3"/><line x1="1220.5" y1="4" x2="1220.5" y2="749" stroke="#8796a8" stroke-width="1" stroke-dasharray="3 3"/><line x1="1252.5" y1="4" x2="1252.5" y2="749" stroke="#8796a8" stroke-width="1" stroke-dasharray="3 3"/><line x1="1284.5" y1="4" x2="1284.5" y2="749" stroke="#8796a8" stroke-width="1" stroke-dasharray="3 3"/><line x1="5" y1="16.5" x2="1292" y2="16.5" stroke="#8796a8" stroke-width="1" stroke-dasharray="3 3"/><line x1="5" y1="49.5" x2="1292" y2="49.5" stroke="#8796a8" stroke-width="1" stroke-dasharray="3 3"/><line x1="5" y1="83.5" x2="1292" y2="83.5" stroke="#8796a8" stroke-width="1" stroke-dasharray="3 3"/><line x1="5" y1="116.5" x2="1292" y2="116.5" stroke="#8796a8" stroke-width="1" stroke-dasharray="3 3"/><line x1="5" y1="149.5" x2="1292" y2="149.5" stroke="#8796a8" stroke-width="1" stroke-dasharray="3 3"/><line x1="5" y1="182.5" x2="1292" y2="182.5" stroke="#8796a8" stroke-width="1" stroke-dasharray="3 3"/><line x1="5" y1="215.5" x2="1292" y2="215.5" stroke="#8796a8" stroke-width="1" stroke-dasharray="3 3"/><line x1="5" y1="249.5" x2="1292" y2="249.5" stroke="#8796a8" stroke-width="1" stroke-dasharray="3 3"/><line x1="5" y1="282.5" x2="1292" y2="282.5" stroke="#8796a8" stroke-width="1" stroke-dasharray="3 3"/><line x1="5" y1="315.5" x2="1292" y2="315.5" stroke="#8796a8" stroke-width="1" stroke-dasharray="3 3"/><line x1="5" y1="348.5" x2="1292" y2="348.5" stroke="#8796a8" stroke-width="1" stroke-dasharray="3 3"/><line x1="5" y1="381.5" x2="1292" y2="381.5" stroke="#8796a8" stroke-width="1" stroke-dasharray="3 3"/><line x1="5" y1="414.5" x2="1292" y2="414.5" stroke="#8796a8" stroke-width="1" stroke-dasharray="3 3"/><line x1="5" y1="448.5" x2="1292" y2="448.5" stroke="#8796a8" stroke-width="1" stroke-dasharray="3 3"/><line x1="5" y1="481.5" x2="1292" y2="481.5" stroke="#8796a8" stroke-width="1" stroke-dasharray="3 3"/><line x1="5" y1="514.5" x2="1292" y2="514.5" stroke="#8796a8" stroke-width="1" stroke-dasharray="3 3"/><line x1="5" y1="547.5" x2="1292" y2="547.5" stroke="#8796a8" stroke-width="1" stroke-dasharray="3 3"/><line x1="5" y1="580.5" x2="1292" y2="580.5" stroke="#8796a8" stroke-width="1" stroke-dasharray="3 3"/><line x1="5" y1="614.5" x2="1292" y2="614.5" stroke="#8796a8" stroke-width="1" stroke-dasharray="3 3"/><line x1="5" y1="647.5" x2="1292" y2="647.5" stroke="#8796a8" stroke-width="1" stroke-dasharray="3 3"/><line x1="5" y1="680.5" x2="1292" y2="680.5" stroke="#8796a8" stroke-width="1" stroke-dasharray="3 3"/><line x1="5" y1="713.5" x2="1292" y2="713.5" stroke="#8796a8" stroke-width="1" stroke-dasharray="3 3"/><line x1="5" y1="746.5" x2="1292" y2="746.5" stroke="#8796a8" stroke-width="1" stroke-dasharray="3 3"/><path d="M4.5 3.5 H1292.5 V749.5 H4.5 Z" fill="none" stroke="#fff" stroke-width="1"/><line x1="1293" y1="16.5" x2="1296" y2="16.5" stroke="#fff"/><line x1="1293" y1="49.5" x2="1296" y2="49.5" stroke="#fff"/><line x1="1293" y1="83.5" x2="1296" y2="83.5" stroke="#fff"/><line x1="1293" y1="116.5" x2="1296" y2="116.5" stroke="#fff"/><line x1="1293" y1="149.5" x2="1296" y2="149.5" stroke="#fff"/><line x1="1293" y1="182.5" x2="1296" y2="182.5" stroke="#fff"/><line x1="1293" y1="215.5" x2="1296" y2="215.5" stroke="#fff"/><line x1="1293" y1="249.5" x2="1296" y2="249.5" stroke="#fff"/><line x1="1293" y1="282.5" x2="1296" y2="282.5" stroke="#fff"/><line x1="1293" y1="315.5" x2="1296" y2="315.5" stroke="#fff"/><line x1="1293" y1="348.5" x2="1296" y2="348.5" stroke="#fff"/><line x1="1293" y1="381.5" x2="1296" y2="381.5" stroke="#fff"/><line x1="1293" y1="414.5" x2="1296" y2="414.5" stroke="#fff"/><line x1="1293" y1="448.5" x2="1296" y2="448.5" stroke="#fff"/><line x1="1293" y1="481.5" x2="1296" y2="481.5" stroke="#fff"/><line x1="1293" y1="514.5" x2="1296" y2="514.5" stroke="#fff"/><line x1="1293" y1="547.5" x2="1296" y2="547.5" stroke="#fff"/><line x1="1293" y1="580.5" x2="1296" y2="580.5" stroke="#fff"/><line x1="1293" y1="614.5" x2="1296" y2="614.5" stroke="#fff"/><line x1="1293" y1="647.5" x2="1296" y2="647.5" stroke="#fff"/><line x1="1293" y1="680.5" x2="1296" y2="680.5" stroke="#fff"/><line x1="1293" y1="713.5" x2="1296" y2="713.5" stroke="#fff"/><line x1="1293" y1="746.5" x2="1296" y2="746.5" stroke="#fff"/><line x1="4.5" y1="750" x2="4.5" y2="754" stroke="#fff"/><line x1="68.5" y1="750" x2="68.5" y2="754" stroke="#fff"/><line x1="132.5" y1="750" x2="132.5" y2="754" stroke="#fff"/><line x1="196.5" y1="750" x2="196.5" y2="754" stroke="#fff"/><line x1="260.5" y1="750" x2="260.5" y2="754" stroke="#fff"/><line x1="324.5" y1="750" x2="324.5" y2="754" stroke="#fff"/><line x1="388.5" y1="750" x2="388.5" y2="754" stroke="#fff"/><line x1="452.5" y1="750" x2="452.5" y2="754" stroke="#fff"/><line x1="516.5" y1="750" x2="516.5" y2="754" stroke="#fff"/><line x1="580.5" y1="750" x2="580.5" y2="754" stroke="#fff"/><line x1="644.5" y1="750" x2="644.5" y2="754" stroke="#fff"/><line x1="708.5" y1="750" x2="708.5" y2="754" stroke="#fff"/><line x1="772.5" y1="750" x2="772.5" y2="754" stroke="#fff"/><line x1="836.5" y1="750" x2="836.5" y2="754" stroke="#fff"/><line x1="900.5" y1="750" x2="900.5" y2="754" stroke="#fff"/><line x1="964.5" y1="750" x2="964.5" y2="754" stroke="#fff"/><line x1="1028.5" y1="750" x2="1028.5" y2="754" stroke="#fff"/><line x1="1092.5" y1="750" x2="1092.5" y2="754" stroke="#fff"/><line x1="1156.5" y1="750" x2="1156.5" y2="754" stroke="#fff"/><line x1="1220.5" y1="750" x2="1220.5" y2="754" stroke="#fff"/><line x1="1284.5" y1="750" x2="1284.5" y2="754" stroke="#fff"/><path d="M410.5 120V128M416.5 120V128M418.5 119V128M420.5 113V128M422.5 114V128M424.5 106V128M426.5 107V128M428.5 110V128M430.5 112V128M432.5 113V128M434.5 113V128M1024.5 112V128M1026.5 106V128M1028.5 121V128M1030.5 114V128M1032.5 118V128M1034.5 39V128M1036.5 44V96M1038.5 84V120M1040.5 109V128M1100.5 305V316M1102.5 288V313M1104.5 281V301M1106.5 284V303M1108.5 301V316M1110.5 301V322M1112.5 294V308M1114.5 284V319M1116.5 308V356M1118.5 258V459M1120.5 431V496M1122.5 422V480M1124.5 451V485M1126.5 424V485M1128.5 349V460M1130.5 357V466M1132.5 442V471M1134.5 446V478M1136.5 450V472M1138.5 420V454M1140.5 431V465M1142.5 443V480M1144.5 446V482M1146.5 453V474M1148.5 459V475M1150.5 453V470M1152.5 459V481M1154.5 456V475M1156.5 459V482M1158.5 460V477M1160.5 459V479M1162.5 463V518M1164.5 470V508M1166.5 497V578M1168.5 548V596M1170.5 540V601M1172.5 519V556M1174.5 509V552M1176.5 492V543M1178.5 519V581M1180.5 537V565M1182.5 516V546M1184.5 526V546M1186.5 529V550M1188.5 542V572M1190.5 563V581M1192.5 560V580M1194.5 557V577M1196.5 556V577M1198.5 550V574M1200.5 553V568M1202.5 550V563M1204.5 545V561M1206.5 550V564M1208.5 557V583M1210.5 542V590M1212.5 517V585M1214.5 547V585M1216.5 556V609M1218.5 553V603M1220.5 559V594M1222.5 557V613M1224.5 563V609M1226.5 572V636M1228.5 519V614M1230.5 512V550M1232.5 475V528M1234.5 476V504M1236.5 474V504M1238.5 476V492M1240.5 465V503M1242.5 460V486M1244.5 459V480M1246.5 439V478M1248.5 431V456M1250.5 426V450M1252.5 435V451M1254.5 443V460M1256.5 447V463M1258.5 450V479M1260.5 465V500M1262.5 471V512M1264.5 453V478M1266.5 445V468M1268.5 448V474M1270.5 431V498M1272.5 465V506M1274.5 377V521M1276.5 378V440M1278.5 429V454M1280.5 433V460M1282.5 430V451M1284.5 453V481M1286.5 458V475" stroke="#00ff00" stroke-width="1" fill="none"/><line x1="5" y1="463.5" x2="1292" y2="463.5" stroke="#8796a8"/></svg><div style="position:absolute;left:1549.5px;top:113px;font-size:9.5px;line-height:12px;color:#fff;white-space:nowrap;letter-spacing:-0.2px;-webkit-text-stroke:0.2px #fff;">1.10270</div><div style="position:absolute;left:1549.5px;top:146px;font-size:9.5px;line-height:12px;color:#fff;white-space:nowrap;letter-spacing:-0.2px;-webkit-text-stroke:0.2px #fff;">1.10130</div><div style="position:absolute;left:1549.5px;top:180px;font-size:9.5px;line-height:12px;color:#fff;white-space:nowrap;letter-spacing:-0.2px;-webkit-text-stroke:0.2px #fff;">1.09990</div><div style="position:absolute;left:1549.5px;top:213px;font-size:9.5px;line-height:12px;color:#fff;white-space:nowrap;letter-spacing:-0.2px;-webkit-text-stroke:0.2px #fff;">1.09850</div><div style="position:absolute;left:1549.5px;top:246px;font-size:9.5px;line-height:12px;color:#fff;white-space:nowrap;letter-spacing:-0.2px;-webkit-text-stroke:0.2px #fff;">1.09710</div><div style="position:absolute;left:1549.5px;top:279px;font-size:9.5px;line-height:12px;color:#fff;white-space:nowrap;letter-spacing:-0.2px;-webkit-text-stroke:0.2px #fff;">1.09570</div><div style="position:absolute;left:1549.5px;top:312px;font-size:9.5px;line-height:12px;color:#fff;white-space:nowrap;letter-spacing:-0.2px;-webkit-text-stroke:0.2px #fff;">1.09430</div><div style="position:absolute;left:1549.5px;top:346px;font-size:9.5px;line-height:12px;color:#fff;white-space:nowrap;letter-spacing:-0.2px;-webkit-text-stroke:0.2px #fff;">1.09290</div><div style="position:absolute;left:1549.5px;top:379px;font-size:9.5px;line-height:12px;color:#fff;white-space:nowrap;letter-spacing:-0.2px;-webkit-text-stroke:0.2px #fff;">1.09150</div><div style="position:absolute;left:1549.5px;top:412px;font-size:9.5px;line-height:12px;color:#fff;white-space:nowrap;letter-spacing:-0.2px;-webkit-text-stroke:0.2px #fff;">1.09010</div><div style="position:absolute;left:1549.5px;top:445px;font-size:9.5px;line-height:12px;color:#fff;white-space:nowrap;letter-spacing:-0.2px;-webkit-text-stroke:0.2px #fff;">1.08870</div><div style="position:absolute;left:1549.5px;top:478px;font-size:9.5px;line-height:12px;color:#fff;white-space:nowrap;letter-spacing:-0.2px;-webkit-text-stroke:0.2px #fff;">1.08730</div><div style="position:absolute;left:1549.5px;top:511px;font-size:9.5px;line-height:12px;color:#fff;white-space:nowrap;letter-spacing:-0.2px;-webkit-text-stroke:0.2px #fff;">1.08590</div><div style="position:absolute;left:1549.5px;top:545px;font-size:9.5px;line-height:12px;color:#fff;white-space:nowrap;letter-spacing:-0.2px;-webkit-text-stroke:0.2px #fff;">1.08450</div><div style="position:absolute;left:1549.5px;top:578px;font-size:9.5px;line-height:12px;color:#fff;white-space:nowrap;letter-spacing:-0.2px;-webkit-text-stroke:0.2px #fff;">1.08310</div><div style="position:absolute;left:1549.5px;top:611px;font-size:9.5px;line-height:12px;color:#fff;white-space:nowrap;letter-spacing:-0.2px;-webkit-text-stroke:0.2px #fff;">1.08170</div><div style="position:absolute;left:1549.5px;top:644px;font-size:9.5px;line-height:12px;color:#fff;white-space:nowrap;letter-spacing:-0.2px;-webkit-text-stroke:0.2px #fff;">1.08030</div><div style="position:absolute;left:1549.5px;top:677px;font-size:9.5px;line-height:12px;color:#fff;white-space:nowrap;letter-spacing:-0.2px;-webkit-text-stroke:0.2px #fff;">1.07890</div><div style="position:absolute;left:1549.5px;top:711px;font-size:9.5px;line-height:12px;color:#fff;white-space:nowrap;letter-spacing:-0.2px;-webkit-text-stroke:0.2px #fff;">1.07750</div><div style="position:absolute;left:1549.5px;top:744px;font-size:9.5px;line-height:12px;color:#fff;white-space:nowrap;letter-spacing:-0.2px;-webkit-text-stroke:0.2px #fff;">1.07610</div><div style="position:absolute;left:1549.5px;top:777px;font-size:9.5px;line-height:12px;color:#fff;white-space:nowrap;letter-spacing:-0.2px;-webkit-text-stroke:0.2px #fff;">1.07470</div><div style="position:absolute;left:1549.5px;top:810px;font-size:9.5px;line-height:12px;color:#fff;white-space:nowrap;letter-spacing:-0.2px;-webkit-text-stroke:0.2px #fff;">1.07330</div><div style="position:absolute;left:1549.5px;top:843px;font-size:9.5px;line-height:12px;color:#fff;white-space:nowrap;letter-spacing:-0.2px;-webkit-text-stroke:0.2px #fff;">1.07190</div><div style="position:absolute;left:1545px;top:561px;width:42px;height:12px;background:#fff;"></div><div style="position:absolute;left:1549.5px;top:560px;font-size:9.5px;line-height:12px;color:#000;white-space:nowrap;letter-spacing:-0.2px;">1.08384</div><div style="position:absolute;left:254px;top:855.5px;font-size:9.5px;line-height:12px;color:#fff;white-space:nowrap;letter-spacing:-0.2px;word-spacing:1px;-webkit-text-stroke:0.2px #fff;">2 Apr 2020</div><div style="position:absolute;left:318px;top:855.5px;font-size:9.5px;line-height:12px;color:#fff;white-space:nowrap;letter-spacing:-0.2px;word-spacing:1px;-webkit-text-stroke:0.2px #fff;">3 Apr 14:00</div><div style="position:absolute;left:382px;top:855.5px;font-size:9.5px;line-height:12px;color:#fff;white-space:nowrap;letter-spacing:-0.2px;word-spacing:1px;-webkit-text-stroke:0.2px #fff;">6 Apr 22:00</div><div style="position:absolute;left:446px;top:855.5px;font-size:9.5px;line-height:12px;color:#fff;white-space:nowrap;letter-spacing:-0.2px;word-spacing:1px;-webkit-text-stroke:0.2px #fff;">8 Apr 06:00</div><div style="position:absolute;left:510px;top:855.5px;font-size:9.5px;line-height:12px;color:#fff;white-space:nowrap;letter-spacing:-0.2px;word-spacing:1px;-webkit-text-stroke:0.2px #fff;">9 Apr 14:00</div><div style="position:absolute;left:574px;top:855.5px;font-size:9.5px;line-height:12px;color:#fff;white-space:nowrap;letter-spacing:-0.2px;word-spacing:1px;-webkit-text-stroke:0.2px #fff;">10 Apr 22:00</div><div style="position:absolute;left:638px;top:855.5px;font-size:9.5px;line-height:12px;color:#fff;white-space:nowrap;letter-spacing:-0.2px;word-spacing:1px;-webkit-text-stroke:0.2px #fff;">14 Apr 06:00</div><div style="position:absolute;left:702px;top:855.5px;font-size:9.5px;line-height:12px;color:#fff;white-space:nowrap;letter-spacing:-0.2px;word-spacing:1px;-webkit-text-stroke:0.2px #fff;">15 Apr 14:00</div><div style="position:absolute;left:766px;top:855.5px;font-size:9.5px;line-height:12px;color:#fff;white-space:nowrap;letter-spacing:-0.2px;word-spacing:1px;-webkit-text-stroke:0.2px #fff;">16 Apr 22:00</div><div style="position:absolute;left:830px;top:855.5px;font-size:9.5px;line-height:12px;color:#fff;white-space:nowrap;letter-spacing:-0.2px;word-spacing:1px;-webkit-text-stroke:0.2px #fff;">20 Apr 06:00</div><div style="position:absolute;left:894px;top:855.5px;font-size:9.5px;line-height:12px;color:#fff;white-space:nowrap;letter-spacing:-0.2px;word-spacing:1px;-webkit-text-stroke:0.2px #fff;">21 Apr 14:00</div><div style="position:absolute;left:958px;top:855.5px;font-size:9.5px;line-height:12px;color:#fff;white-space:nowrap;letter-spacing:-0.2px;word-spacing:1px;-webkit-text-stroke:0.2px #fff;">22 Apr 22:00</div><div style="position:absolute;left:1022px;top:855.5px;font-size:9.5px;line-height:12px;color:#fff;white-space:nowrap;letter-spacing:-0.2px;word-spacing:1px;-webkit-text-stroke:0.2px #fff;">24 Apr 06:00</div><div style="position:absolute;left:1086px;top:855.5px;font-size:9.5px;line-height:12px;color:#fff;white-space:nowrap;letter-spacing:-0.2px;word-spacing:1px;-webkit-text-stroke:0.2px #fff;">27 Apr 14:00</div><div style="position:absolute;left:1150px;top:855.5px;font-size:9.5px;line-height:12px;color:#fff;white-space:nowrap;letter-spacing:-0.2px;word-spacing:1px;-webkit-text-stroke:0.2px #fff;">28 Apr 22:00</div><div style="position:absolute;left:1214px;top:855.5px;font-size:9.5px;line-height:12px;color:#fff;white-space:nowrap;letter-spacing:-0.2px;word-spacing:1px;-webkit-text-stroke:0.2px #fff;">30 Apr 06:00</div><div style="position:absolute;left:1278px;top:855.5px;font-size:9.5px;line-height:12px;color:#fff;white-space:nowrap;letter-spacing:-0.2px;word-spacing:1px;-webkit-text-stroke:0.2px #fff;">1 May 14:00</div><div style="position:absolute;left:1342px;top:855.5px;font-size:9.5px;line-height:12px;color:#fff;white-space:nowrap;letter-spacing:-0.2px;word-spacing:1px;-webkit-text-stroke:0.2px #fff;">4 May 22:00</div><div style="position:absolute;left:1406px;top:855.5px;font-size:9.5px;line-height:12px;color:#fff;white-space:nowrap;letter-spacing:-0.2px;word-spacing:1px;-webkit-text-stroke:0.2px #fff;">6 May 06:00</div><div style="position:absolute;left:1470px;top:855.5px;font-size:9.5px;line-height:12px;color:#fff;white-space:nowrap;letter-spacing:-0.2px;word-spacing:1px;-webkit-text-stroke:0.2px #fff;">7 May 14:00</div><div style="position:absolute;left:1534px;top:855.5px;font-size:9.5px;line-height:12px;color:#fff;white-space:nowrap;letter-spacing:-0.2px;word-spacing:1px;-webkit-text-stroke:0.2px #fff;">8 May 22:00</div><div style="position:absolute;left:259px;top:108px;font-size:9.5px;line-height:12px;color:#fff;white-space:nowrap;letter-spacing:-0.1px;-webkit-text-stroke:0.15px #fff;">EURUSD,H1&nbsp; 1.08364 1.08404 1.08337 1.08384</div><div style="position:absolute;left:227px;top:225px;width:1124px;height:618px;background:#202020;border:1px solid #3c3c3c;box-shadow:0 2px 14px rgba(0,0,0,0.3);"></div><div style="position:absolute;left:228px;top:226px;width:1122px;height:30px;background:#2b2b2b;"></div><div style="position:absolute;left:228px;top:256px;width:1122px;height:23px;background:#000;"></div><div style="position:absolute;left:228px;top:256px;width:56px;height:23px;background:#0b9ba3;"></div><div style="position:absolute;left:228px;top:279px;width:1122px;height:39px;background:#191919;"></div><div style="position:absolute;left:228px;top:318px;width:191px;height:500px;background:#191919;"></div><div style="position:absolute;left:418px;top:318px;width:2px;height:500px;background:#151515;"></div><div style="position:absolute;left:420px;top:318px;width:1px;height:500px;background:#2a2a2a;"></div><div style="position:absolute;left:228px;top:818px;width:1122px;height:24px;background:#2d2d2d;"></div><svg style="position:absolute;left:237px;top:232px;" width="14" height="17" viewBox="0 0 14 17"><defs><linearGradient id="fg" x1="0" y1="0" x2="1" y2="1"><stop offset="0" stop-color="#ffefb4"/><stop offset="1" stop-color="#f8da7a"/></linearGradient></defs><rect x="0" y="0.5" width="11" height="16" fill="url(#fg)"/><path d="M9.5 16.5 V8.5 L12.5 7.5 V16.5Z" fill="#efcf6e"/></svg><div style="position:absolute;left:258px;top:234px;width:3px;height:14px;border-left:1px solid #777;border-right:1px solid #777;"></div><svg style="position:absolute;left:270px;top:232px;" width="14" height="17" viewBox="0 0 14 17"><rect x="0.5" y="0.5" width="11" height="15" fill="#f4f4f4" stroke="#bbb" stroke-width="0.6"/><path d="M3 9 L5.5 11.5 L10 5" stroke="#e08a1e" stroke-width="1.4" fill="none"/></svg><svg style="position:absolute;left:291px;top:232px;" width="14" height="17" viewBox="0 0 14 17"><defs><linearGradient id="fg" x1="0" y1="0" x2="1" y2="1"><stop offset="0" stop-color="#ffefb4"/><stop offset="1" stop-color="#f8da7a"/></linearGradient></defs><rect x="0" y="0.5" width="11" height="16" fill="url(#fg)"/><path d="M9.5 16.5 V8.5 L12.5 7.5 V16.5Z" fill="#efcf6e"/></svg><svg style="position:absolute;left:311px;top:236px;" width="10" height="10" viewBox="0 0 10 10"><rect x="1" y="2" width="7" height="1" fill="#fff"/><path d="M1 5 H8 L4.5 8.5 Z" fill="#fff"/></svg><div style="position:absolute;left:327px;top:234px;width:3px;height:14px;border-left:1px solid #777;border-right:1px solid #777;"></div><div style="position:absolute;left:336px;top:234px;font-size:12px;line-height:14px;color:#9a9a9a;white-space:nowrap;">98A82F92176B73A2100FCD1F8ABD7255</div><div style="position:absolute;left:1231px;top:240px;width:11px;height:1px;background:#b5b5b5;"></div><div style="position:absolute;left:1276px;top:235px;width:11px;height:11px;border:1px solid #b5b5b5;"></div><svg style="position:absolute;left:1321px;top:234px;" width="12" height="12" viewBox="0 0 12 12"><path d="M0.5 0.5 L11.5 11.5 M11.5 0.5 L0.5 11.5" stroke="#b5b5b5" stroke-width="1.1"/></svg><div style="position:absolute;left:243px;top:261px;font-size:12.5px;line-height:15px;color:#000;white-space:nowrap;">文件</div><div style="position:absolute;left:297px;top:261px;font-size:12.5px;line-height:15px;color:#fff;white-space:nowrap;">主页</div><div style="position:absolute;left:350px;top:261px;font-size:12.5px;line-height:15px;color:#fff;white-space:nowrap;">共享</div><div style="position:absolute;left:403px;top:261px;font-size:12.5px;line-height:15px;color:#fff;white-space:nowrap;">查看</div><svg style="position:absolute;left:1312px;top:264px;" width="12" height="8" viewBox="0 0 12 8"><path d="M1.5 1.5 L6 6 L10.5 1.5" stroke="#fff" stroke-width="1.8" fill="none"/></svg><svg style="position:absolute;left:1330px;top:260px;" width="18" height="18" viewBox="0 0 18 18"><circle cx="9" cy="9" r="8" fill="#1a73d9" stroke="#fff" stroke-width="1.3"/><text x="9" y="13.5" font-size="12" font-weight="bold" fill="#fff" text-anchor="middle" font-family="Liberation Sans">?</text></svg><svg style="position:absolute;left:239px;top:291px;" width="15" height="15" viewBox="0 0 15 15"><path d="M13 7.5 H2 M7 2.5 L2 7.5 L7 12.5" stroke="#8a8a8a" stroke-width="1.6" fill="none"/></svg><svg style="position:absolute;left:269px;top:291px;" width="15" height="15" viewBox="0 0 15 15"><path d="M2 7.5 H13 M8 2.5 L13 7.5 L8 12.5" stroke="#8a8a8a" stroke-width="1.6" fill="none"/></svg><svg style="position:absolute;left:295px;top:295px;" width="9" height="7" viewBox="0 0 9 7"><path d="M1 1.5 L4.5 5 L8 1.5" stroke="#777" stroke-width="1.3" fill="none"/></svg><svg style="position:absolute;left:313px;top:291px;" width="15" height="15" viewBox="0 0 15 15"><path d="M7.5 14 V2 M2.5 7 L7.5 2 L12.5 7" stroke="#fff" stroke-width="1.8" fill="none"/></svg><div style="position:absolute;left:333px;top:288px;width:791px;height:23px;border:1px solid #5a5a5a;background:#191919;"></div><div style="position:absolute;left:1102px;top:289px;width:1px;height:22px;background:#2e2e2e;"></div><svg style="position:absolute;left:338px;top:291px;" width="14" height="17" viewBox="0 0 14 17"><defs><linearGradient id="fg" x1="0" y1="0" x2="1" y2="1"><stop offset="0" stop-color="#ffefb4"/><stop offset="1" stop-color="#f8da7a"/></linearGradient></defs><rect x="0" y="0.5" width="11" height="16" fill="url(#fg)"/><path d="M9.5 16.5 V8.5 L12.5 7.5 V16.5Z" fill="#efcf6e"/></svg><svg style="position:absolute;left:358px;top:295px;" width="9" height="7" viewBox="0 0 9 7"><path d="M4 0.5 L1 3.5 L4 6.5 M8 0.5 L5 3.5 L8 6.5" stroke="#8a8a8a" stroke-width="1.1" fill="none"/></svg><div style="position:absolute;left:375px;top:291px;font-size:13px;line-height:15px;color:#f2f2f2;white-space:nowrap;letter-spacing:-0.15px;">用户</div><div style="position:absolute;left:424px;top:291px;font-size:13px;line-height:15px;color:#f2f2f2;white-space:nowrap;letter-spacing:-0.15px;">58301</div><div style="position:absolute;left:484px;top:291px;font-size:13px;line-height:15px;color:#f2f2f2;white-space:nowrap;letter-spacing:-0.15px;">AppData</div><div style="position:absolute;left:560px;top:291px;font-size:13px;line-height:15px;color:#f2f2f2;white-space:nowrap;letter-spacing:-0.15px;">Roaming</div><div style="position:absolute;left:637px;top:291px;font-size:13px;line-height:15px;color:#f2f2f2;white-space:nowrap;letter-spacing:-0.15px;">MetaQuotes</div><div style="position:absolute;left:735px;top:291px;font-size:13px;line-height:15px;color:#f2f2f2;white-space:nowrap;letter-spacing:-0.15px;">Terminal</div><div style="position:absolute;left:809px;top:291px;font-size:12.2px;line-height:15px;color:#f2f2f2;white-space:nowrap;letter-spacing:-0.05px;">98A82F92176B73A2100FCD1F8ABD7255</div><svg style="position:absolute;left:408px;top:295px;" width="6" height="9" viewBox="0 0 6 9"><path d="M1.5 1.5 L4.5 4.5 L1.5 7.5" stroke="#999" stroke-width="1.5" fill="none"/></svg><svg style="position:absolute;left:469px;top:295px;" width="6" height="9" viewBox="0 0 6 9"><path d="M1.5 1.5 L4.5 4.5 L1.5 7.5" stroke="#999" stroke-width="1.5" fill="none"/></svg><svg style="position:absolute;left:545px;top:295px;" width="6" height="9" viewBox="0 0 6 9"><path d="M1.5 1.5 L4.5 4.5 L1.5 7.5" stroke="#999" stroke-width="1.5" fill="none"/></svg><svg style="position:absolute;left:622px;top:295px;" width="6" height="9" viewBox="0 0 6 9"><path d="M1.5 1.5 L4.5 4.5 L1.5 7.5" stroke="#999" stroke-width="1.5" fill="none"/></svg><svg style="position:absolute;left:720px;top:295px;" width="6" height="9" viewBox="0 0 6 9"><path d="M1.5 1.5 L4.5 4.5 L1.5 7.5" stroke="#999" stroke-width="1.5" fill="none"/></svg><svg style="position:absolute;left:795px;top:295px;" width="6" height="9" viewBox="0 0 6 9"><path d="M1.5 1.5 L4.5 4.5 L1.5 7.5" stroke="#999" stroke-width="1.5" fill="none"/></svg><svg style="position:absolute;left:1088px;top:296px;" width="12" height="8" viewBox="0 0 12 8"><path d="M1.5 1.5 L6 6 L10.5 1.5" stroke="#ccc" stroke-width="1.6" fill="none"/></svg><svg style="position:absolute;left:1107px;top:292px;" width="14" height="14" viewBox="0 0 14 14"><path d="M11 7 A4.5 4.5 0 1 1 8.5 2.8" stroke="#bbb" stroke-width="1.6" fill="none"/><path d="M7 0.5 L10.5 3 L7 5.5 Z" fill="#bbb"/></svg><div style="position:absolute;left:1136px;top:288px;width:202px;height:23px;border:1px solid #5a5a5a;background:#191919;"></div><div style="position:absolute;left:1146px;top:291px;font-size:13px;line-height:15px;color:#a0a0a0;white-space:nowrap;letter-spacing:-0.2px;">搜索"98A82F92176B73A210...</div><svg style="position:absolute;left:1316px;top:292px;" width="14" height="14" viewBox="0 0 14 14"><circle cx="8.5" cy="5.5" r="4" stroke="#bbb" stroke-width="1.5" fill="none"/><path d="M5.5 8.5 L1.5 12.5" stroke="#bbb" stroke-width="1.8"/></svg><svg style="position:absolute;left:403px;top:322px;" width="11" height="8" viewBox="0 0 11 8"><path d="M1 6.5 L5.5 2 L10 6.5" stroke="#9a9a9a" stroke-width="1.3" fill="none"/></svg><div style="position:absolute;left:402px;top:425px;width:15px;height:291px;background:#4d4d4d;"></div><svg style="position:absolute;left:404px;top:806px;" width="11" height="8" viewBox="0 0 11 8"><path d="M1 1.5 L5.5 6 L10 1.5" stroke="#9a9a9a" stroke-width="1.3" fill="none"/></svg><div style="position:absolute;left:228px;top:719px;width:172px;height:22px;background:#333;"></div><svg style="position:absolute;left:261px;top:321px;" width="14" height="17" viewBox="0 0 14 17"><defs><linearGradient id="fg" x1="0" y1="0" x2="1" y2="1"><stop offset="0" stop-color="#ffefb4"/><stop offset="1" stop-color="#f8da7a"/></linearGradient></defs><rect x="0" y="0.5" width="11" height="16" fill="url(#fg)"/><path d="M9.5 16.5 V8.5 L12.5 7.5 V16.5Z" fill="#efcf6e"/></svg><div style="position:absolute;left:280px;top:322px;font-size:13px;line-height:16px;color:#f0f0f0;white-space:nowrap;">Experts</div><svg style="position:absolute;left:261px;top:345px;" width="14" height="17" viewBox="0 0 14 17"><defs><linearGradient id="fg" x1="0" y1="0" x2="1" y2="1"><stop offset="0" stop-color="#ffefb4"/><stop offset="1" stop-color="#f8da7a"/></linearGradient></defs><rect x="0" y="0.5" width="11" height="16" fill="url(#fg)"/><path d="M9.5 16.5 V8.5 L12.5 7.5 V16.5Z" fill="#efcf6e"/></svg><div style="position:absolute;left:280px;top:346px;font-size:13px;line-height:16px;color:#f0f0f0;white-space:nowrap;">Indicators</div><svg style="position:absolute;left:261px;top:369px;" width="14" height="17" viewBox="0 0 14 17"><defs><linearGradient id="fg" x1="0" y1="0" x2="1" y2="1"><stop offset="0" stop-color="#ffefb4"/><stop offset="1" stop-color="#f8da7a"/></linearGradient></defs><rect x="0" y="0.5" width="11" height="16" fill="url(#fg)"/><path d="M9.5 16.5 V8.5 L12.5 7.5 V16.5Z" fill="#efcf6e"/></svg><div style="position:absolute;left:280px;top:370px;font-size:13px;line-height:16px;color:#f0f0f0;white-space:nowrap;">templates</div><svg style="position:absolute;left:259px;top:394px;" width="16" height="14" viewBox="0 0 16 14"><rect x="0" y="1" width="15" height="11" fill="#1f7de0"/><path d="M9 12 L15 5 V12 Z" fill="#5aaaf0"/><rect x="0" y="11" width="15" height="1.5" fill="#0b4f9e"/><rect x="2" y="11.3" width="1" height="1" fill="#fff"/><rect x="12" y="11.3" width="1" height="1" fill="#fff"/></svg><div style="position:absolute;left:280px;top:394px;font-size:13px;line-height:16px;color:#f0f0f0;white-space:nowrap;">桌面</div><svg style="position:absolute;left:250px;top:426px;" width="18" height="12" viewBox="0 0 18 12"><path d="M4 11 H15 A3 3 0 0 0 15 5 A4.5 4.5 0 0 0 7 3.5 A3.5 3.5 0 0 0 4 11 Z" fill="#2a84d8"/><path d="M2.5 11 H10 L11 8 A3 3 0 0 0 4 6.5 A2.5 2.5 0 0 0 2.5 11Z" fill="#1565b8"/></svg><div style="position:absolute;left:272px;top:426px;font-size:13px;line-height:16px;color:#f0f0f0;white-space:nowrap;">OneDrive</div><svg style="position:absolute;left:261px;top:449px;" width="14" height="17" viewBox="0 0 14 17"><defs><linearGradient id="fg" x1="0" y1="0" x2="1" y2="1"><stop offset="0" stop-color="#ffefb4"/><stop offset="1" stop-color="#f8da7a"/></linearGradient></defs><rect x="0" y="0.5" width="11" height="16" fill="url(#fg)"/><path d="M9.5 16.5 V8.5 L12.5 7.5 V16.5Z" fill="#efcf6e"/></svg><div style="position:absolute;left:280px;top:450px;font-size:13px;line-height:16px;color:#f0f0f0;white-space:nowrap;">图片</div><svg style="position:absolute;left:261px;top:473px;" width="14" height="17" viewBox="0 0 14 17"><defs><linearGradient id="fg" x1="0" y1="0" x2="1" y2="1"><stop offset="0" stop-color="#ffefb4"/><stop offset="1" stop-color="#f8da7a"/></linearGradient></defs><rect x="0" y="0.5" width="11" height="16" fill="url(#fg)"/><path d="M9.5 16.5 V8.5 L12.5 7.5 V16.5Z" fill="#efcf6e"/></svg><div style="position:absolute;left:280px;top:474px;font-size:13px;line-height:16px;color:#f0f0f0;white-space:nowrap;">文档</div><svg style="position:absolute;left:250px;top:506px;" width="18" height="15" viewBox="0 0 18 15"><rect x="0.5" y="0.5" width="16" height="10" fill="#5ab4f0" stroke="#2f86c8"/><rect x="2" y="2" width="13" height="7" fill="#7fd0ff"/><rect x="6" y="11" width="5" height="2" fill="#888"/><rect x="2" y="13" width="13" height="1.5" fill="#bbb"/></svg><div style="position:absolute;left:272px;top:506px;font-size:13px;line-height:16px;color:#f0f0f0;white-space:nowrap;">此电脑</div><svg style="position:absolute;left:258px;top:530px;" width="17" height="16" viewBox="0 0 17 16"><ellipse cx="7" cy="9.5" rx="6" ry="5.5" transform="rotate(-35 7 9.5)" fill="#e9b268"/><path d="M4 5 Q9 0 15 4 Q13 10 9 11 Q6 8 4 5Z" fill="#9a5a22"/><path d="M13 3 L16 1.5" stroke="#9a5a22" stroke-width="1.3"/><ellipse cx="5" cy="11" rx="2" ry="2.5" fill="#f4cc88"/></svg><div style="position:absolute;left:280px;top:530px;font-size:13px;line-height:16px;color:#f0f0f0;white-space:nowrap;">坚果云</div><svg style="position:absolute;left:259px;top:553px;" width="16" height="16" viewBox="0 0 16 16"><path d="M8 1 L15 4.5 V12 L8 15.5 L1 12 V4.5 Z" fill="#4fb6f0"/><path d="M8 8 L15 4.5 V12 L8 15.5Z" fill="#2a8fd4"/><path d="M8 1 L15 4.5 L8 8 L1 4.5Z" fill="#9fe0ff"/></svg><div style="position:absolute;left:280px;top:554px;font-size:13px;line-height:16px;color:#f0f0f0;white-space:nowrap;">3D 对象</div><svg style="position:absolute;left:260px;top:578px;" width="14" height="16" viewBox="0 0 14 16"><rect x="0" y="0" width="14" height="16" fill="#2a2a2a" stroke="#555" stroke-width="0.6"/><rect x="3" y="1.5" width="8" height="5.5" fill="#4a8ed8"/><rect x="3" y="8.5" width="8" height="6" fill="#4a8ed8"/><rect x="6" y="4" width="4" height="3" fill="#d8a040"/><rect x="6" y="11" width="4" height="3" fill="#d8a040"/><path d="M1.5 1 V15 M12.5 1 V15" stroke="#777" stroke-width="1" stroke-dasharray="1 1.2"/></svg><div style="position:absolute;left:280px;top:578px;font-size:13px;line-height:16px;color:#f0f0f0;white-space:nowrap;">视频</div><svg style="position:absolute;left:259px;top:603px;" width="16" height="13" viewBox="0 0 16 13"><rect x="0.5" y="0.5" width="15" height="11" fill="#f0f0f0" stroke="#999"/><rect x="2" y="2" width="12" height="8" fill="#4a8ed8"/><path d="M2 10 L6 6 L10 9 L14 7 V10Z" fill="#3a4a5a"/></svg><div style="position:absolute;left:280px;top:602px;font-size:13px;line-height:16px;color:#f0f0f0;white-space:nowrap;">图片</div><svg style="position:absolute;left:260px;top:625px;" width="14" height="16" viewBox="0 0 14 16"><path d="M0.5 0.5 H9.5 L13.5 4.5 V15.5 H0.5Z" fill="#f4f4f4" stroke="#999"/><path d="M3 5 H9 M3 8 H11 M3 11 H11" stroke="#3a7fd0" stroke-width="1.2"/></svg><div style="position:absolute;left:280px;top:626px;font-size:13px;line-height:16px;color:#f0f0f0;white-space:nowrap;">文档</div><svg style="position:absolute;left:259px;top:649px;" width="16" height="16" viewBox="0 0 16 16"><path d="M5 1 H11 V8 H15 L8 15 L1 8 H5Z" fill="#2b86e0"/></svg><div style="position:absolute;left:280px;top:650px;font-size:13px;line-height:16px;color:#f0f0f0;white-space:nowrap;">下载</div><svg style="position:absolute;left:261px;top:673px;" width="12" height="16" viewBox="0 0 12 16"><path d="M6 1 V12" stroke="#2b86e0" stroke-width="2"/><ellipse cx="4" cy="12.5" rx="3.5" ry="2.8" fill="#2b86e0"/><path d="M6 1 Q12 4 10 9 Q10 5 6 4Z" fill="#2b86e0"/></svg><div style="position:absolute;left:280px;top:674px;font-size:13px;line-height:16px;color:#f0f0f0;white-space:nowrap;">音乐</div><svg style="position:absolute;left:259px;top:698px;" width="16" height="14" viewBox="0 0 16 14"><rect x="0" y="1" width="15" height="11" fill="#1f7de0"/><path d="M9 12 L15 5 V12 Z" fill="#5aaaf0"/><rect x="0" y="11" width="15" height="1.5" fill="#0b4f9e"/><rect x="2" y="11.3" width="1" height="1" fill="#fff"/><rect x="12" y="11.3" width="1" height="1" fill="#fff"/></svg><div style="position:absolute;left:280px;top:698px;font-size:13px;line-height:16px;color:#f0f0f0;white-space:nowrap;">桌面</div><svg style="position:absolute;left:259px;top:722px;" width="16" height="15" viewBox="0 0 16 15"><path d="M2 7 H14 L15.5 10 V14 H0.5 V10Z" fill="#e8e8e8" stroke="#aaa" stroke-width="0.6"/><rect x="1" y="11" width="14" height="3" fill="#444"/><rect x="12" y="12" width="1.5" height="1" fill="#6f6"/><rect x="0" y="0" width="3" height="3" fill="#3ab0ff"/><rect x="4" y="0" width="3" height="3" fill="#3ab0ff"/><rect x="0" y="4" width="3" height="3" fill="#3ab0ff"/><rect x="4" y="4" width="3" height="3" fill="#3ab0ff"/></svg><div style="position:absolute;left:280px;top:722px;font-size:13px;line-height:16px;color:#f0f0f0;white-space:nowrap;">Windows (C:)</div><svg style="position:absolute;left:259px;top:746px;" width="16" height="15" viewBox="0 0 16 15"><path d="M2 7 H14 L15.5 10 V14 H0.5 V10Z" fill="#e8e8e8" stroke="#aaa" stroke-width="0.6"/><rect x="1" y="11" width="14" height="3" fill="#444"/><rect x="12" y="12" width="1.5" height="1" fill="#6f6"/></svg><div style="position:absolute;left:280px;top:746px;font-size:13px;line-height:16px;color:#f0f0f0;white-space:nowrap;">Data (D:)</div><svg style="position:absolute;left:264px;top:769px;" width="10" height="16" viewBox="0 0 10 16"><rect x="1" y="0.5" width="8" height="13.5" fill="#eee" stroke="#aaa" stroke-width="0.6"/><rect x="3" y="2" width="1" height="11" fill="#999"/><rect x="6" y="2" width="1" height="11" fill="#999"/><rect x="4" y="1.5" width="2" height="1.5" fill="#6c6"/><rect x="0" y="15" width="10" height="1" fill="#888"/></svg><div style="position:absolute;left:280px;top:770px;font-size:13px;line-height:16px;color:#f0f0f0;white-space:nowrap;">U 盘 (E:)</div><svg style="position:absolute;left:254px;top:801px;" width="10" height="16" viewBox="0 0 10 16"><rect x="1" y="0.5" width="8" height="13.5" fill="#eee" stroke="#aaa" stroke-width="0.6"/><rect x="3" y="2" width="1" height="11" fill="#999"/><rect x="6" y="2" width="1" height="11" fill="#999"/><rect x="4" y="1.5" width="2" height="1.5" fill="#6c6"/><rect x="0" y="15" width="10" height="1" fill="#888"/></svg><div style="position:absolute;left:272px;top:802px;font-size:13px;line-height:16px;color:#f0f0f0;white-space:nowrap;">U 盘 (E:)</div><svg style="position:absolute;left:559px;top:317px;" width="9" height="6" viewBox="0 0 9 6"><path d="M1 5 L4.5 1.5 L8 5" stroke="#aaa" stroke-width="1.1" fill="none"/></svg><div style="position:absolute;left:693px;top:318px;width:1px;height:27px;background:#474747;"></div><div style="position:absolute;left:837px;top:318px;width:1px;height:27px;background:#474747;"></div><div style="position:absolute;left:957px;top:318px;width:1px;height:27px;background:#474747;"></div><div style="position:absolute;left:1037px;top:318px;width:1px;height:27px;background:#474747;"></div><div style="position:absolute;left:439px;top:324.5px;font-size:12px;line-height:15px;color:#dedede;white-space:nowrap;">名称</div><div style="position:absolute;left:700px;top:324.5px;font-size:12px;line-height:15px;color:#dedede;white-space:nowrap;">修改日期</div><div style="position:absolute;left:844px;top:324.5px;font-size:12px;line-height:15px;color:#dedede;white-space:nowrap;">类型</div><div style="position:absolute;left:964px;top:324.5px;font-size:12px;line-height:15px;color:#dedede;white-space:nowrap;">大小</div><svg style="position:absolute;left:442px;top:353px;" width="14" height="17" viewBox="0 0 14 17"><defs><linearGradient id="fg" x1="0" y1="0" x2="1" y2="1"><stop offset="0" stop-color="#ffefb4"/><stop offset="1" stop-color="#f8da7a"/></linearGradient></defs><rect x="0" y="0.5" width="11" height="16" fill="url(#fg)"/><path d="M9.5 16.5 V8.5 L12.5 7.5 V16.5Z" fill="#efcf6e"/></svg><div style="position:absolute;left:460px;top:354px;font-size:13px;line-height:16px;color:#f2f2f2;white-space:nowrap;letter-spacing:-0.1px;">config</div><div style="position:absolute;left:700px;top:354px;font-size:13px;line-height:16px;color:#d8d8d8;white-space:nowrap;letter-spacing:-0.05px;">2020/03/11 00:09</div><div style="position:absolute;left:844px;top:354px;font-size:12px;line-height:16px;color:#d8d8d8;white-space:nowrap;">文件夹</div><svg style="position:absolute;left:442px;top:374px;" width="14" height="17" viewBox="0 0 14 17"><defs><linearGradient id="fg" x1="0" y1="0" x2="1" y2="1"><stop offset="0" stop-color="#ffefb4"/><stop offset="1" stop-color="#f8da7a"/></linearGradient></defs><rect x="0" y="0.5" width="11" height="16" fill="url(#fg)"/><path d="M9.5 16.5 V8.5 L12.5 7.5 V16.5Z" fill="#efcf6e"/></svg><div style="position:absolute;left:460px;top:375px;font-size:13px;line-height:16px;color:#f2f2f2;white-space:nowrap;letter-spacing:-0.1px;">history</div><div style="position:absolute;left:700px;top:375px;font-size:13px;line-height:16px;color:#d8d8d8;white-space:nowrap;letter-spacing:-0.05px;">2020/03/10 23:58</div><div style="position:absolute;left:844px;top:375px;font-size:12px;line-height:16px;color:#d8d8d8;white-space:nowrap;">文件夹</div><svg style="position:absolute;left:442px;top:395px;" width="14" height="17" viewBox="0 0 14 17"><defs><linearGradient id="fg" x1="0" y1="0" x2="1" y2="1"><stop offset="0" stop-color="#ffefb4"/><stop offset="1" stop-color="#f8da7a"/></linearGradient></defs><rect x="0" y="0.5" width="11" height="16" fill="url(#fg)"/><path d="M9.5 16.5 V8.5 L12.5 7.5 V16.5Z" fill="#efcf6e"/></svg><div style="position:absolute;left:460px;top:396px;font-size:13px;line-height:16px;color:#f2f2f2;white-space:nowrap;letter-spacing:-0.1px;">logs</div><div style="position:absolute;left:700px;top:396px;font-size:13px;line-height:16px;color:#d8d8d8;white-space:nowrap;letter-spacing:-0.05px;">2020/05/18 00:20</div><div style="position:absolute;left:844px;top:396px;font-size:12px;line-height:16px;color:#d8d8d8;white-space:nowrap;">文件夹</div><svg style="position:absolute;left:442px;top:416px;" width="14" height="17" viewBox="0 0 14 17"><defs><linearGradient id="fg" x1="0" y1="0" x2="1" y2="1"><stop offset="0" stop-color="#ffefb4"/><stop offset="1" stop-color="#f8da7a"/></linearGradient></defs><rect x="0" y="0.5" width="11" height="16" fill="url(#fg)"/><path d="M9.5 16.5 V8.5 L12.5 7.5 V16.5Z" fill="#efcf6e"/></svg><div style="position:absolute;left:460px;top:417px;font-size:13px;line-height:16px;color:#f2f2f2;white-space:nowrap;letter-spacing:-0.1px;">MQL4</div><div style="position:absolute;left:700px;top:417px;font-size:13px;line-height:16px;color:#d8d8d8;white-space:nowrap;letter-spacing:-0.05px;">2018/08/02 15:29</div><div style="position:absolute;left:844px;top:417px;font-size:12px;line-height:16px;color:#d8d8d8;white-space:nowrap;">文件夹</div><svg style="position:absolute;left:442px;top:437px;" width="14" height="17" viewBox="0 0 14 17"><defs><linearGradient id="fg" x1="0" y1="0" x2="1" y2="1"><stop offset="0" stop-color="#ffefb4"/><stop offset="1" stop-color="#f8da7a"/></linearGradient></defs><rect x="0" y="0.5" width="11" height="16" fill="url(#fg)"/><path d="M9.5 16.5 V8.5 L12.5 7.5 V16.5Z" fill="#efcf6e"/></svg><div style="position:absolute;left:460px;top:438px;font-size:13px;line-height:16px;color:#f2f2f2;white-space:nowrap;letter-spacing:-0.1px;">profiles</div><div style="position:absolute;left:700px;top:438px;font-size:13px;line-height:16px;color:#d8d8d8;white-space:nowrap;letter-spacing:-0.05px;">2020/04/12 00:16</div><div style="position:absolute;left:844px;top:438px;font-size:12px;line-height:16px;color:#d8d8d8;white-space:nowrap;">文件夹</div><svg style="position:absolute;left:442px;top:458px;" width="14" height="17" viewBox="0 0 14 17"><defs><linearGradient id="fg" x1="0" y1="0" x2="1" y2="1"><stop offset="0" stop-color="#ffefb4"/><stop offset="1" stop-color="#f8da7a"/></linearGradient></defs><rect x="0" y="0.5" width="11" height="16" fill="url(#fg)"/><path d="M9.5 16.5 V8.5 L12.5 7.5 V16.5Z" fill="#efcf6e"/></svg><div style="position:absolute;left:460px;top:459px;font-size:13px;line-height:16px;color:#f2f2f2;white-space:nowrap;letter-spacing:-0.1px;">templates</div><div style="position:absolute;left:700px;top:459px;font-size:13px;line-height:16px;color:#d8d8d8;white-space:nowrap;letter-spacing:-0.05px;">2020/03/12 11:27</div><div style="position:absolute;left:844px;top:459px;font-size:12px;line-height:16px;color:#d8d8d8;white-space:nowrap;">文件夹</div><svg style="position:absolute;left:442px;top:479px;" width="14" height="17" viewBox="0 0 14 17"><defs><linearGradient id="fg" x1="0" y1="0" x2="1" y2="1"><stop offset="0" stop-color="#ffefb4"/><stop offset="1" stop-color="#f8da7a"/></linearGradient></defs><rect x="0" y="0.5" width="11" height="16" fill="url(#fg)"/><path d="M9.5 16.5 V8.5 L12.5 7.5 V16.5Z" fill="#efcf6e"/></svg><div style="position:absolute;left:460px;top:480px;font-size:13px;line-height:16px;color:#f2f2f2;white-space:nowrap;letter-spacing:-0.1px;">tester</div><div style="position:absolute;left:700px;top:480px;font-size:13px;line-height:16px;color:#d8d8d8;white-space:nowrap;letter-spacing:-0.05px;">2020/05/11 00:40</div><div style="position:absolute;left:844px;top:480px;font-size:12px;line-height:16px;color:#d8d8d8;white-space:nowrap;">文件夹</div><svg style="position:absolute;left:442px;top:500px;" width="14" height="17" viewBox="0 0 14 17"><rect x="0.5" y="0.5" width="11" height="15.5" fill="#f6d878" stroke="#e2b94c" stroke-width="0.6"/><rect x="5" y="0.5" width="2.5" height="15.5" fill="#ddd"/><path d="M5 2 H7.5 M5 5 H7.5 M5 8 H7.5 M5 11 H7.5" stroke="#777" stroke-width="1"/><rect x="10" y="9" width="3.5" height="7.5" fill="#eac35a"/></svg><div style="position:absolute;left:460px;top:501px;font-size:13px;line-height:16px;color:#f2f2f2;white-space:nowrap;letter-spacing:-0.1px;">Forex Real Profit EA</div><div style="position:absolute;left:700px;top:501px;font-size:13px;line-height:16px;color:#d8d8d8;white-space:nowrap;letter-spacing:-0.05px;">2020/03/17 01:18</div><div style="position:absolute;left:844px;top:501px;font-size:12px;line-height:16px;color:#d8d8d8;white-space:nowrap;">压缩(zipped)文件...</div><div style="position:absolute;right:559px;top:501px;font-size:13px;line-height:16px;color:#d8d8d8;white-space:nowrap;text-align:right;">82 KB</div><svg style="position:absolute;left:442px;top:521px;" width="13" height="17" viewBox="0 0 13 17"><path d="M0.5 0.5 H8.5 L12.5 4.5 V16.5 H0.5Z" fill="#f2f2f2" stroke="#aaa" stroke-width="0.7"/></svg><div style="position:absolute;left:460px;top:522px;font-size:13px;line-height:16px;color:#f2f2f2;white-space:nowrap;letter-spacing:-0.1px;">ForexRealProfitEA.rar</div><div style="position:absolute;left:700px;top:522px;font-size:13px;line-height:16px;color:#d8d8d8;white-space:nowrap;letter-spacing:-0.05px;">2020/03/09 00:18</div><div style="position:absolute;left:844px;top:522px;font-size:12px;line-height:16px;color:#d8d8d8;white-space:nowrap;">RAR 文件</div><div style="position:absolute;right:559px;top:522px;font-size:13px;line-height:16px;color:#d8d8d8;white-space:nowrap;text-align:right;">3,198 KB</div><svg style="position:absolute;left:440px;top:541px;" width="18" height="18" viewBox="0 0 18 18"><rect x="1" y="3" width="12" height="14" fill="#f4f4f4" stroke="#888" stroke-width="0.7"/><path d="M2 1.5 V4 M4 1.5 V4 M6 1.5 V4 M8 1.5 V4 M10 1.5 V4 M12 1.5 V4" stroke="#333" stroke-width="0.8"/><rect x="3" y="11" width="8" height="4" fill="#7bd85a"/><path d="M8 13 L16 3" stroke="#c8a030" stroke-width="2.2"/><path d="M15 2 L17 1" stroke="#d33" stroke-width="2"/></svg><div style="position:absolute;left:460px;top:543px;font-size:13px;line-height:16px;color:#f2f2f2;white-space:nowrap;letter-spacing:-0.1px;">origin</div><div style="position:absolute;left:700px;top:543px;font-size:13px;line-height:16px;color:#d8d8d8;white-space:nowrap;letter-spacing:-0.05px;">2020/03/10 23:48</div><div style="position:absolute;left:844px;top:543px;font-size:12px;line-height:16px;color:#d8d8d8;white-space:nowrap;">TXT 文件</div><div style="position:absolute;right:559px;top:543px;font-size:13px;line-height:16px;color:#d8d8d8;white-space:nowrap;text-align:right;">1 KB</div><div style="position:absolute;left:242px;top:824px;font-size:12.5px;line-height:15px;color:#e0e0e0;white-space:nowrap;">10 个项目</div><div style="position:absolute;left:305px;top:825px;width:1px;height:11px;background:#ccc;"></div><div style="position:absolute;left:1302px;top:819px;width:22px;height:23px;background:#5d5d5d;border:1px solid #7a7a7a;"></div><svg style="position:absolute;left:1307px;top:822px;" width="8" height="17" viewBox="0 0 8 17"><rect x="0.5" y="0.5" width="7" height="16" fill="#eee" stroke="#999" stroke-width="0.5"/><rect x="2.5" y="2.5" width="3" height="3" fill="#444"/><rect x="2.5" y="7" width="3" height="3" fill="#3a8ee0"/><rect x="2.5" y="11.5" width="3" height="3" fill="#a33"/></svg><svg style="position:absolute;left:1328px;top:823px;" width="16" height="12" viewBox="0 0 16 12"><rect x="0.5" y="0.5" width="15" height="11" fill="#eee" stroke="#aaa"/><rect x="2" y="2" width="12" height="8" fill="#3a8ee0"/><path d="M2 10 L6 6 L10 8 L14 6 V10Z" fill="#444"/></svg>
</div>
</body></html>
